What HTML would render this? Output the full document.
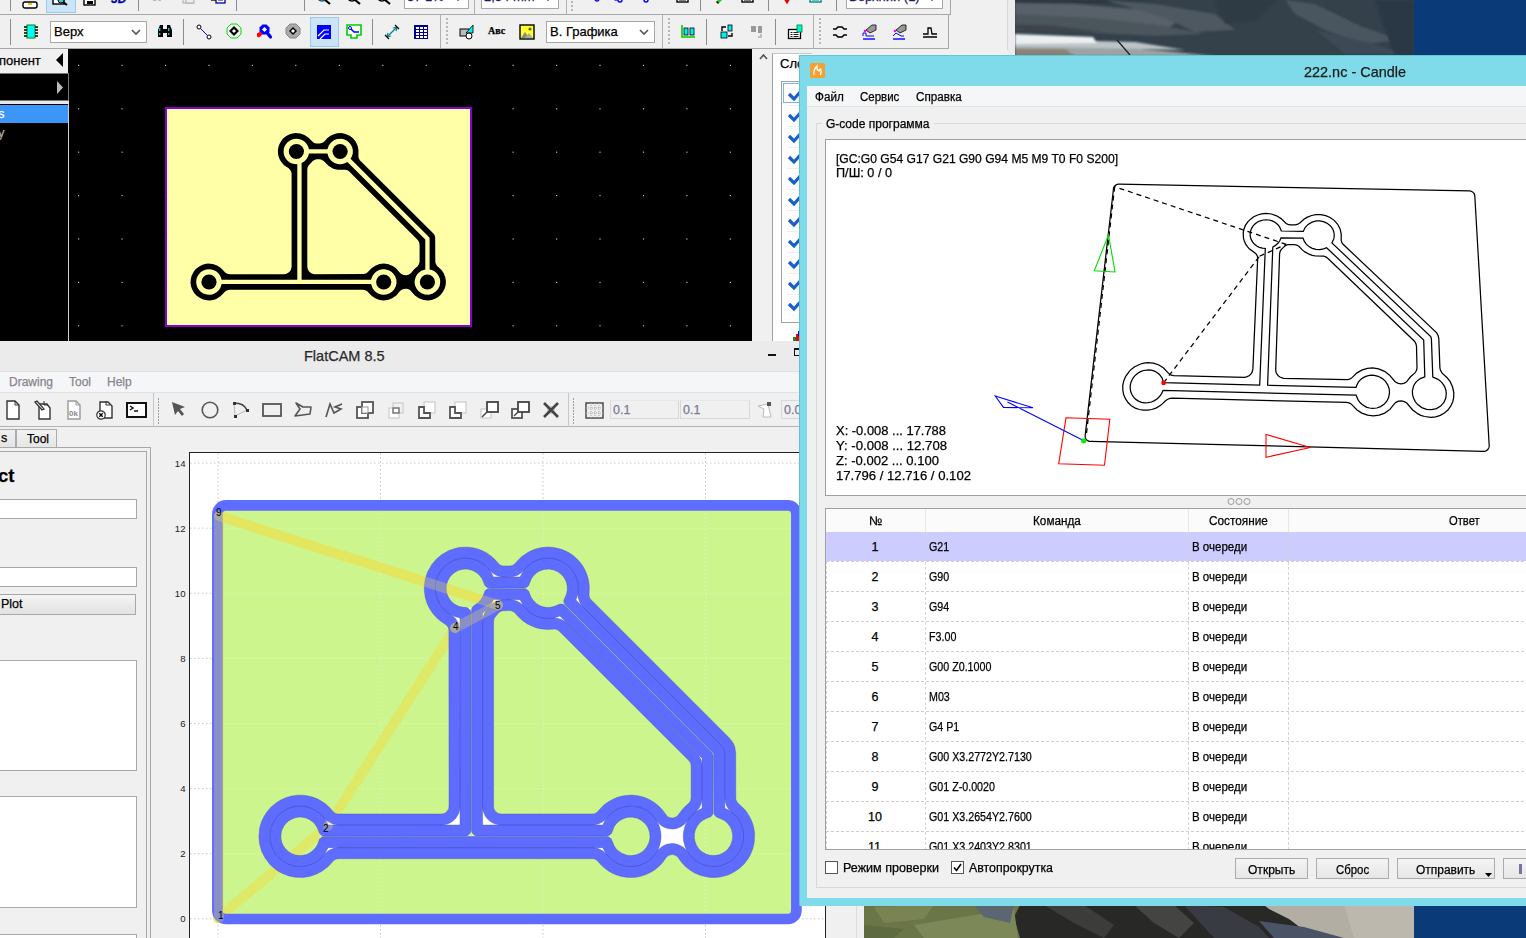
<!DOCTYPE html><html><head><meta charset="utf-8"><style>
*{box-sizing:border-box}
body{margin:0;width:1526px;height:938px;position:relative;overflow:hidden;background:#f0f0f0;font-family:"Liberation Sans",sans-serif;font-size:12px;color:#000}
.a{position:absolute}
.t{position:absolute;white-space:nowrap;line-height:1;-webkit-text-stroke:0.25px currentColor}
svg{position:absolute;overflow:visible}
</style></head><body>

<svg style="left:1015px;top:0" width="399" height="56" viewBox="0 0 399 56"><defs><filter id="bl" x="-5%" y="-20%" width="110%" height="140%"><feGaussianBlur stdDeviation="1.2"/></filter></defs><rect width="399" height="56" fill="#34404a"/><g filter="url(#bl)"><path d="M0 0 H140 L100 3 L0 3 Z" fill="#2c343c"/><path d="M0 3 L60 4 L130 10 L165 20 L150 30 L60 26 L0 24 Z" fill="#58616a"/><path d="M0 14 L80 18 L150 26 L190 34 L140 36 L60 32 L0 30 Z" fill="#4b545c"/><path d="M0 24 L40 26 L90 32 L30 32 L0 31 Z" fill="#3c444c"/><path d="M90 0 L140 4 L200 14 L220 30 L180 32 L150 18 Z" fill="#4e5860"/><path d="M200 0 H260 L240 20 L210 24 Z" fill="#2e3a44"/><path d="M270 0 L300 4 L345 26 L385 40 L350 44 L310 30 L280 14 Z" fill="#4a5660"/><path d="M300 30 L360 44 L390 54 L330 54 Z" fill="#3e4a54"/><path d="M360 0 H399 V56 H380 L370 30 Z" fill="#2c3844"/><path d="M0 46 L90 46 L160 52 L200 56 H0 Z" fill="#9ea2a2"/><path d="M0 49 L50 49 L60 56 H0 Z" fill="#8a8276"/><path d="M0 39 L120 42 L170 50 L80 48 L0 47 Z" fill="#bcc4c8"/><path d="M0 34 L78 37 L82 43 L0 44 Z" fill="#eaf0f2"/></g><path d="M102 40 L115 55" stroke="#1a1e22" stroke-width="1.2"/></svg>
<div class="a" style="left:1414px;top:0;width:112px;height:56px;background:#0a3a78"></div>
<svg style="left:864px;top:905px" width="550" height="33" viewBox="0 0 550 33"><rect width="550" height="33" fill="#282826"/><path d="M0 0 H156 L150 12 L156 33 H0 Z" fill="#6a7548"/><path d="M10 2 L70 0 L60 14 L20 18 Z" fill="#7a8452"/><path d="M50 20 L110 10 L150 4 L154 33 H60 Z" fill="#7c8858"/><path d="M110 0 H150 L146 18 L120 12 Z" fill="#5c6670"/><path d="M0 20 L40 24 L30 33 H0 Z" fill="#5e6a40"/><path d="M180 0 L220 0 L250 20 L240 33 L210 18 Z" fill="#3c3c3a"/><path d="M270 0 L310 0 L330 18 L315 33 L290 18 Z" fill="#444442"/><path d="M320 0 L360 2 L395 22 L405 33 L350 33 Z" fill="#383c42"/><path d="M400 0 H550 V33 H450 L425 14 L405 4 Z" fill="#b3aea3"/><path d="M395 16 L440 22 L480 33 H410 Z" fill="#4a5466"/><path d="M480 0 H550 V33 H490 Z" fill="#bcb8ad"/></svg>
<div class="a" style="left:1414px;top:905px;width:112px;height:33px;background:#0a3a78"></div>
<div class="a" style="left:0;top:0;width:1015px;height:50px;background:#f0f0f0"></div>
<div class="a" style="left:0;top:14px;width:951px;height:1px;background:#a8a8a8"></div>
<div class="a" style="left:950px;top:0;width:1px;height:15px;background:#a8a8a8"></div>
<div class="a" style="left:0;top:48px;width:949px;height:1px;background:#a8a8a8"></div>
<div class="a" style="left:948px;top:15px;width:1px;height:34px;background:#a8a8a8"></div>
<div class="a" style="left:1007px;top:0;width:1px;height:50px;background:#d8d8d8"></div>
<div class="a" style="left:1008px;top:0;width:7px;height:56px;background:#ececec"></div>
<div class="a" style="left:474px;top:0;width:1px;height:14px;background:#b0b0b0"></div>
<div class="a" style="left:566px;top:0;width:1px;height:14px;background:#b0b0b0"></div>
<div class="a" style="left:440px;top:15px;width:1px;height:33px;background:#b0b0b0"></div>
<div class="a" style="left:662px;top:15px;width:1px;height:33px;background:#b0b0b0"></div>
<div class="a" style="left:813px;top:15px;width:1px;height:33px;background:#b0b0b0"></div>
<div class="a" style="left:10px;top:0;width:1px;height:11px;background:#8c8c8c"></div>
<div class="a" style="left:138px;top:0;width:1px;height:11px;background:#8c8c8c"></div>
<div class="a" style="left:236px;top:0;width:1px;height:11px;background:#8c8c8c"></div>
<div class="a" style="left:304px;top:0;width:1px;height:11px;background:#8c8c8c"></div>
<div class="a" style="left:700px;top:0;width:1px;height:11px;background:#8c8c8c"></div>
<div class="a" style="left:768px;top:0;width:1px;height:11px;background:#8c8c8c"></div>
<div class="a" style="left:836px;top:0;width:1px;height:11px;background:#8c8c8c"></div>
<div class="a" style="left:10px;top:19px;width:1px;height:26px;background:#8c8c8c"></div>
<div class="a" style="left:183px;top:19px;width:1px;height:26px;background:#8c8c8c"></div>
<div class="a" style="left:372px;top:19px;width:1px;height:26px;background:#8c8c8c"></div>
<div class="a" style="left:706px;top:19px;width:1px;height:26px;background:#8c8c8c"></div>
<div class="a" style="left:775px;top:19px;width:1px;height:26px;background:#8c8c8c"></div>
<div class="a" style="left:571px;top:1px;width:2px;height:2px;background:#b8b8b8"></div><div class="a" style="left:571px;top:5px;width:2px;height:2px;background:#b8b8b8"></div><div class="a" style="left:571px;top:9px;width:2px;height:2px;background:#b8b8b8"></div>
<div class="a" style="left:446px;top:18px;width:2px;height:2px;background:#b8b8b8"></div><div class="a" style="left:446px;top:22px;width:2px;height:2px;background:#b8b8b8"></div><div class="a" style="left:446px;top:26px;width:2px;height:2px;background:#b8b8b8"></div><div class="a" style="left:446px;top:30px;width:2px;height:2px;background:#b8b8b8"></div><div class="a" style="left:446px;top:34px;width:2px;height:2px;background:#b8b8b8"></div><div class="a" style="left:446px;top:38px;width:2px;height:2px;background:#b8b8b8"></div><div class="a" style="left:446px;top:42px;width:2px;height:2px;background:#b8b8b8"></div>
<div class="a" style="left:668px;top:18px;width:2px;height:2px;background:#b8b8b8"></div><div class="a" style="left:668px;top:22px;width:2px;height:2px;background:#b8b8b8"></div><div class="a" style="left:668px;top:26px;width:2px;height:2px;background:#b8b8b8"></div><div class="a" style="left:668px;top:30px;width:2px;height:2px;background:#b8b8b8"></div><div class="a" style="left:668px;top:34px;width:2px;height:2px;background:#b8b8b8"></div><div class="a" style="left:668px;top:38px;width:2px;height:2px;background:#b8b8b8"></div><div class="a" style="left:668px;top:42px;width:2px;height:2px;background:#b8b8b8"></div>
<div class="a" style="left:819px;top:18px;width:2px;height:2px;background:#b8b8b8"></div><div class="a" style="left:819px;top:22px;width:2px;height:2px;background:#b8b8b8"></div><div class="a" style="left:819px;top:26px;width:2px;height:2px;background:#b8b8b8"></div><div class="a" style="left:819px;top:30px;width:2px;height:2px;background:#b8b8b8"></div><div class="a" style="left:819px;top:34px;width:2px;height:2px;background:#b8b8b8"></div><div class="a" style="left:819px;top:38px;width:2px;height:2px;background:#b8b8b8"></div><div class="a" style="left:819px;top:42px;width:2px;height:2px;background:#b8b8b8"></div>
<div class="a" style="left:46px;top:-2px;width:30px;height:15px;background:#cce4f7;border:1px solid #99c9ef"></div>
<div class="a" style="left:310px;top:17px;width:29px;height:30px;background:#cce4f7;border:1px solid #99c9ef"></div>
<div class="a" style="left:404px;top:-12px;width:65px;height:21px;background:#fff;border:1px solid #a8a8a8"></div>
<svg style="left:453px;top:-5px" width="10" height="6"><path d="M1 1 L5 5 L9 1" fill="none" stroke="#555" stroke-width="1.6"/></svg>
<div class="a" style="left:481px;top:-12px;width:78px;height:21px;background:#fff;border:1px solid #a8a8a8"></div>
<svg style="left:543px;top:-5px" width="10" height="6"><path d="M1 1 L5 5 L9 1" fill="none" stroke="#555" stroke-width="1.6"/></svg>
<div class="a" style="left:846px;top:-12px;width:97px;height:21px;background:#fff;border:1px solid #a8a8a8"></div>
<svg style="left:927px;top:-5px" width="10" height="6"><path d="M1 1 L5 5 L9 1" fill="none" stroke="#555" stroke-width="1.6"/></svg>
<div class="t" style="left:407px;top:-10px;font-size:13px;color:#1a1a6a">37 1%</div>
<div class="t" style="left:484px;top:-10px;font-size:13px;color:#1a1a6a">2,54 mm</div>
<div class="t" style="left:849px;top:-10px;font-size:13px;color:#1a1a6a">Верхний (1)</div>
<div class="a" style="left:50px;top:21px;width:97px;height:22px;background:#fff;border:1px solid #a8a8a8"></div>
<svg style="left:131px;top:29px" width="10" height="6"><path d="M1 1 L5 5 L9 1" fill="none" stroke="#555" stroke-width="1.6"/></svg>
<div class="t" style="left:54px;top:25px;font-size:13px">Верх</div>
<div class="a" style="left:546px;top:21px;width:109px;height:22px;background:#fff;border:1px solid #a8a8a8"></div>
<svg style="left:639px;top:29px" width="10" height="6"><path d="M1 1 L5 5 L9 1" fill="none" stroke="#555" stroke-width="1.6"/></svg>
<div class="t" style="left:550px;top:25px;font-size:13px">В. Графика</div>
<svg style="left:22px;top:-1px" width="16" height="16" viewBox="0 0 16 16"><rect x="1" y="3" width="14" height="6" rx="2" fill="#fff" stroke="#000" stroke-width="1.4"/><rect x="6" y="4" width="4" height="2" fill="#e0d000"/></svg>
<svg style="left:52px;top:-2px" width="16" height="16" viewBox="0 0 16 16"><rect x="1" y="0" width="11" height="6" fill="#fff" stroke="#000" stroke-width="1.4"/><circle cx="9" cy="2" r="3" fill="#3cc" stroke="#000"/><path d="M11 4 L15 7" stroke="#000" stroke-width="2"/></svg>
<svg style="left:82px;top:-2px" width="16" height="16" viewBox="0 0 16 16"><rect x="2" y="-2" width="11" height="9" fill="#fff" stroke="#000" stroke-width="1.4"/><rect x="5" y="3" width="6" height="3" fill="#000"/></svg>
<div class="t" style="left:111px;top:-7px;font-size:12px;font-weight:bold;color:#0000b0;font-style:italic">3D</div>
<svg style="left:150px;top:-2px" width="16" height="16" viewBox="0 0 16 16"><text x="2" y="3" font-size="9" fill="#aaa" font-family="Liberation Sans">80</text></svg>
<svg style="left:180px;top:-3px" width="16" height="16" viewBox="0 0 16 16"><rect x="3" y="0" width="10" height="6" fill="none" stroke="#aaa"/><rect x="6" y="1" width="8" height="5" fill="#eee" stroke="#aaa"/></svg>
<svg style="left:210px;top:-3px" width="16" height="16" viewBox="0 0 16 16"><rect x="1" y="-2" width="7" height="6" fill="#555520"/><rect x="6" y="-1" width="9" height="7" fill="#fff" stroke="#0000a0" stroke-width="1.3"/><path d="M8 3h5" stroke="#0000a0"/></svg>
<svg style="left:254px;top:-4px" width="16" height="16" viewBox="0 0 16 16"><path d="M8 -2v3" stroke="#1010a0" stroke-width="2"/></svg>
<svg style="left:278px;top:-4px" width="16" height="16" viewBox="0 0 16 16"><path d="M8 -2v2" stroke="#888" stroke-width="1.5"/></svg>
<svg style="left:317px;top:-2px" width="16" height="16" viewBox="0 0 16 16"><circle cx="5" cy="-2" r="5" fill="none" stroke="#0a5a8a" stroke-width="1.6"/><path d="M8 2 L13 6" stroke="#000" stroke-width="2.2"/></svg>
<svg style="left:347px;top:-2px" width="16" height="16" viewBox="0 0 16 16"><circle cx="5" cy="-2" r="5" fill="none" stroke="#000" stroke-width="1.6"/><path d="M8 2 L13 6" stroke="#000" stroke-width="2.2"/></svg>
<svg style="left:377px;top:-2px" width="16" height="16" viewBox="0 0 16 16"><circle cx="5" cy="-2" r="5" fill="none" stroke="#000" stroke-width="1.6"/><path d="M8 2 L13 6" stroke="#000" stroke-width="2.2"/></svg>
<svg style="left:589px;top:-3px" width="16" height="16" viewBox="0 0 16 16"><circle cx="8" cy="2" r="2" fill="none" stroke="#00f" stroke-width="1.4"/></svg>
<svg style="left:610px;top:-3px" width="16" height="16" viewBox="0 0 16 16"><circle cx="6" cy="1" r="2" fill="none" stroke="#00f" stroke-width="1.4"/><circle cx="10" cy="3" r="2" fill="none" stroke="#00f" stroke-width="1.4"/></svg>
<svg style="left:642px;top:-3px" width="16" height="16" viewBox="0 0 16 16"><circle cx="4" cy="3" r="2" fill="none" stroke="#00f" stroke-width="1.4"/><path d="M5 2 L10 -1" stroke="#00f" stroke-width="1.4"/><path d="M8 0 L12 -1" stroke="#f00" stroke-width="1.4"/></svg>
<svg style="left:676px;top:-3px" width="16" height="16" viewBox="0 0 16 16"><rect x="1" y="-3" width="11" height="8" fill="#fff" stroke="#000" stroke-width="1.4"/><path d="M3 1h7M3 3h7" stroke="#000"/><circle cx="14" cy="-1" r="2" fill="none" stroke="#00f"/></svg>
<svg style="left:712px;top:-3px" width="16" height="16" viewBox="0 0 16 16"><path d="M5 4 L12 -3 L14 -1 L7 6 Z" fill="#2c2"/><path d="M5 4 L5 6 L7 6" stroke="#000"/></svg>
<svg style="left:740px;top:-3px" width="16" height="16" viewBox="0 0 16 16"><rect x="2" y="-3" width="11" height="8" fill="#fff" stroke="#000" stroke-width="1.4"/><path d="M4 1h7M4 3h7" stroke="#000"/></svg>
<svg style="left:779px;top:-3px" width="16" height="16" viewBox="0 0 16 16"><path d="M3 -3 L8 5 L13 -3" fill="none" stroke="#e00" stroke-width="2.4"/></svg>
<svg style="left:808px;top:-3px" width="16" height="16" viewBox="0 0 16 16"><rect x="2" y="-3" width="11" height="8" fill="#fff" stroke="#088" stroke-width="1.4"/><path d="M4 1h7M4 3h7" stroke="#088"/></svg>
<svg style="left:23px;top:24px" width="16" height="16" viewBox="0 0 16 16"><rect x="4" y="1" width="8" height="13" fill="#0ff" stroke="#080" stroke-width="1"/><path d="M1 3h3M1 6h3M1 9h3M1 12h3M12 3h3M12 6h3M12 9h3M12 12h3" stroke="#000" stroke-width="1.5"/></svg>
<svg style="left:157px;top:23px" width="16" height="16" viewBox="0 0 16 16"><path d="M1 14 V7 L3 2 H6 V14 Z M10 14 V2 H13 L15 7 V14 Z M6 6 H10 V10 H6 Z" fill="#000"/><rect x="2" y="5" width="1.4" height="3" fill="#0cc"/><rect x="11" y="5" width="1.4" height="3" fill="#0cc"/><rect x="2" y="10" width="1.4" height="2" fill="#0cc"/><rect x="11" y="10" width="1.4" height="2" fill="#0cc"/></svg>
<svg style="left:196px;top:24px" width="16" height="16" viewBox="0 0 16 16"><circle cx="3" cy="3" r="2" fill="#fff" stroke="#000"/><circle cx="13" cy="13" r="2" fill="#fff" stroke="#000"/><path d="M4.5 4.5 L11.5 11.5" stroke="#00f"/></svg>
<svg style="left:226px;top:23px" width="16" height="16" viewBox="0 0 16 16"><path d="M5 1 H11 L15 5 V11 L11 15 H5 L1 11 V5 Z" fill="#f0f0f0" stroke="#0d0" stroke-width="1"/><path d="M8 3 L13 8 L8 13 L3 8 Z" fill="#000"/><path d="M8 6 L10 8 L8 10 L6 8 Z" fill="#fff"/></svg>
<svg style="left:256px;top:23px" width="16" height="16" viewBox="0 0 16 16"><path d="M6.5 1.5 H10.5 L13.5 4.5 V8.5 L10.5 11.5 H6.5 L3.5 8.5 V4.5 Z" fill="#00f"/><path d="M8.5 4 L11 6.5 L8.5 9 L6 6.5 Z" fill="#fff"/><path d="M11 9.5 L14.5 14" stroke="#00f" stroke-width="3.2" stroke-linecap="round"/><path d="M1 10.5 L4.5 8.5 L6.5 11.5 L3 14.5 L1 13.5 Z" fill="#f00"/></svg>
<svg style="left:285px;top:23px" width="16" height="16" viewBox="0 0 16 16"><path d="M5 1 H11 L15 5 V11 L11 15 H5 L1 11 V5 Z" fill="#aaa" stroke="#888"/><path d="M8 4 L12 8 L8 12 L4 8 Z" fill="#000"/><path d="M8 6 L10 8 L8 10 L6 8 Z" fill="#fff"/></svg>
<svg style="left:316px;top:24px" width="16" height="16" viewBox="0 0 16 16"><rect x="1" y="1" width="14" height="14" fill="#00f"/><path d="M2 12 L8 6 H13 M4 15 L9 10 H13" stroke="#fff" stroke-width="1.2" fill="none"/></svg>
<svg style="left:346px;top:24px" width="16" height="16" viewBox="0 0 16 16"><path d="M1 1 H15 V11 H11 V14 H5 V11 H1 Z" fill="#fff" stroke="#0c0" stroke-width="1.6"/><circle cx="4" cy="4" r="1.5" fill="none" stroke="#00f"/><path d="M5 5 L8 8 H13" stroke="#00f" stroke-width="1.6" fill="none"/></svg>
<svg style="left:384px;top:24px" width="16" height="16" viewBox="0 0 16 16"><path d="M3 13 L13 3" stroke="#088" stroke-width="1.2"/><path d="M3 13 L4 9 M3 13 L7 12 M13 3 L12 7 M13 3 L9 4" stroke="#088" stroke-width="1.2"/><path d="M1 11 L5 15 M11 1 L15 5" stroke="#000" stroke-width="1.2"/></svg>
<svg style="left:413px;top:24px" width="16" height="16" viewBox="0 0 16 16"><rect x="1" y="1" width="14" height="14" fill="#008"/><g fill="#fff"><rect x="3" y="3" width="3" height="2"/><rect x="7" y="3" width="3" height="2"/><rect x="11" y="3" width="3" height="2"/><rect x="3" y="6" width="3" height="2"/><rect x="7" y="6" width="3" height="2"/><rect x="11" y="6" width="3" height="2"/><rect x="3" y="9" width="3" height="2"/><rect x="7" y="9" width="3" height="2"/><rect x="11" y="9" width="3" height="2"/><rect x="3" y="12" width="3" height="2"/><rect x="7" y="12" width="3" height="2"/><rect x="11" y="12" width="3" height="2"/></g></svg>
<svg style="left:459px;top:24px" width="16" height="16" viewBox="0 0 16 16"><rect x="1" y="5" width="9" height="7" fill="#bbb" stroke="#000"/><path d="M7 9 L14 1 V9 Z" fill="#0ee" stroke="#000" stroke-width=".8"/><circle cx="10" cy="12" r="3" fill="#fff" stroke="#000"/></svg>
<div class="t" style="left:488px;top:26px;font-size:10px;font-family:'Liberation Serif',serif;font-weight:bold">Авс</div>
<svg style="left:519px;top:24px" width="16" height="16" viewBox="0 0 16 16"><rect x="1" y="1" width="14" height="14" fill="#ff3" stroke="#000" stroke-width="1.4"/><path d="M2 14 L6 8 L10 14 Z" fill="#888"/><path d="M6 14 L10 9 L14 14" fill="#aaa"/><circle cx="11" cy="5" r="1.6" fill="#660"/></svg>
<svg style="left:680px;top:23px" width="16" height="16" viewBox="0 0 16 16"><path d="M2 2 V14 H15" fill="none" stroke="#0c0" stroke-width="1.6"/><rect x="4" y="5" width="4" height="7" fill="#0ee" stroke="#000" stroke-width=".8"/><rect x="10" y="5" width="4" height="7" fill="#0ee" stroke="#000" stroke-width=".8"/></svg>
<svg style="left:719px;top:24px" width="16" height="16" viewBox="0 0 16 16"><rect x="2" y="8" width="6" height="6" fill="#0ee" stroke="#000" stroke-width=".8"/><rect x="9" y="1" width="4" height="6" fill="#0ee" stroke="#000" stroke-width=".8"/><path d="M3 7 V3 H7 M13 9 V12 H9" fill="none" stroke="#000" stroke-width="1.4"/></svg>
<svg style="left:749px;top:24px" width="16" height="16" viewBox="0 0 16 16"><rect x="2" y="2" width="5" height="6" fill="#999"/><rect x="9" y="2" width="4" height="7" fill="#999"/><path d="M12 10 V13 H9" fill="none" stroke="#aaa" stroke-width="1.4"/></svg>
<svg style="left:787px;top:24px" width="16" height="16" viewBox="0 0 16 16"><rect x="1.5" y="5.5" width="12" height="9" fill="#fff" stroke="#000" stroke-width="1.3"/><path d="M3.5 8.5h2M6.5 8.5h5M3.5 10.5h2M6.5 10.5h5M3.5 12.5h2M6.5 12.5h5" stroke="#000" stroke-width=".9"/><rect x="10" y="1" width="5" height="7" fill="#0ee" stroke="#080" stroke-width=".8"/></svg>
<svg style="left:832px;top:24px" width="16" height="16" viewBox="0 0 16 16"><path d="M1 5 H4 L6 3 H10 L12 5 H15 M1 11 H4 L6 13 H10 L12 11 H15" fill="none" stroke="#000" stroke-width="1.6"/></svg>
<svg style="left:861px;top:24px" width="16" height="16" viewBox="0 0 16 16"><path d="M5 6 L11 1 H15 V6 L9 9 Z" fill="#999" stroke="#000" stroke-width=".8"/><path d="M2 15 H14" stroke="#00f" stroke-width="1.4"/><path d="M2 12 V9 H5 V12 H13" fill="none" stroke="#00f"/><circle cx="4" cy="7" r="1.3" fill="#f0f"/></svg>
<svg style="left:891px;top:24px" width="16" height="16" viewBox="0 0 16 16"><path d="M5 6 L11 1 H15 V6 L9 9 Z" fill="#999" stroke="#000" stroke-width=".8"/><path d="M2 15 H14" stroke="#00f" stroke-width="1.4"/><path d="M2 12 L5 9 L10 12 H13" fill="none" stroke="#00f"/><circle cx="4" cy="7" r="1.3" fill="#f0f"/></svg>
<svg style="left:922px;top:24px" width="16" height="16" viewBox="0 0 16 16"><path d="M1 10 H6 V4 H9 L10 10 H15 M1 13 H15" fill="none" stroke="#000" stroke-width="1.3"/></svg>
<div class="a" style="left:0;top:49px;width:70px;height:292px;background:#000"></div>
<div class="a" style="left:0;top:49px;width:68px;height:24px;background:#f0f0f0"></div>
<div class="t" style="left:-1px;top:54px;font-size:13px;color:#000">понент</div>
<svg style="left:56px;top:53px" width="7" height="14"><path d="M7 0 V14 L0 7 Z" fill="#000"/></svg>
<div class="a" style="left:0;top:73px;width:69px;height:28px;background:#000;border:1px solid #777;border-left:none"></div>
<svg style="left:57px;top:81px" width="6" height="13"><path d="M0 0 V13 L6 6.5 Z" fill="#bbb"/></svg>
<div class="a" style="left:0;top:101px;width:69px;height:3px;background:#e8e8e8"></div>
<div class="a" style="left:0;top:105px;width:68px;height:18px;background:#3c96f8"></div>
<div class="t" style="left:-2px;top:107px;font-size:13px;color:#fff">s</div>
<div class="t" style="left:-2px;top:126px;font-size:13px;color:#aaa">y</div>
<div class="a" style="left:68px;top:104px;width:1px;height:237px;background:#d0d0d0"></div>
<div class="a" style="left:70px;top:49px;width:682px;height:292px;background:#000"></div>
<svg style="left:70px;top:49px" width="682" height="292" fill="#bbb"><rect x="8.0" y="15.8" width="1.2" height="1.2"/><rect x="8.0" y="59.2" width="1.2" height="1.2"/><rect x="8.0" y="102.6" width="1.2" height="1.2"/><rect x="8.0" y="146.0" width="1.2" height="1.2"/><rect x="8.0" y="189.4" width="1.2" height="1.2"/><rect x="8.0" y="232.8" width="1.2" height="1.2"/><rect x="8.0" y="276.2" width="1.2" height="1.2"/><rect x="51.5" y="15.8" width="1.2" height="1.2"/><rect x="51.5" y="59.2" width="1.2" height="1.2"/><rect x="51.5" y="102.6" width="1.2" height="1.2"/><rect x="51.5" y="146.0" width="1.2" height="1.2"/><rect x="51.5" y="189.4" width="1.2" height="1.2"/><rect x="51.5" y="232.8" width="1.2" height="1.2"/><rect x="51.5" y="276.2" width="1.2" height="1.2"/><rect x="94.9" y="15.8" width="1.2" height="1.2"/><rect x="94.9" y="59.2" width="1.2" height="1.2"/><rect x="94.9" y="102.6" width="1.2" height="1.2"/><rect x="94.9" y="146.0" width="1.2" height="1.2"/><rect x="94.9" y="189.4" width="1.2" height="1.2"/><rect x="94.9" y="232.8" width="1.2" height="1.2"/><rect x="94.9" y="276.2" width="1.2" height="1.2"/><rect x="138.4" y="15.8" width="1.2" height="1.2"/><rect x="138.4" y="59.2" width="1.2" height="1.2"/><rect x="138.4" y="102.6" width="1.2" height="1.2"/><rect x="138.4" y="146.0" width="1.2" height="1.2"/><rect x="138.4" y="189.4" width="1.2" height="1.2"/><rect x="138.4" y="232.8" width="1.2" height="1.2"/><rect x="138.4" y="276.2" width="1.2" height="1.2"/><rect x="181.8" y="15.8" width="1.2" height="1.2"/><rect x="181.8" y="59.2" width="1.2" height="1.2"/><rect x="181.8" y="102.6" width="1.2" height="1.2"/><rect x="181.8" y="146.0" width="1.2" height="1.2"/><rect x="181.8" y="189.4" width="1.2" height="1.2"/><rect x="181.8" y="232.8" width="1.2" height="1.2"/><rect x="181.8" y="276.2" width="1.2" height="1.2"/><rect x="225.2" y="15.8" width="1.2" height="1.2"/><rect x="225.2" y="59.2" width="1.2" height="1.2"/><rect x="225.2" y="102.6" width="1.2" height="1.2"/><rect x="225.2" y="146.0" width="1.2" height="1.2"/><rect x="225.2" y="189.4" width="1.2" height="1.2"/><rect x="225.2" y="232.8" width="1.2" height="1.2"/><rect x="225.2" y="276.2" width="1.2" height="1.2"/><rect x="268.7" y="15.8" width="1.2" height="1.2"/><rect x="268.7" y="59.2" width="1.2" height="1.2"/><rect x="268.7" y="102.6" width="1.2" height="1.2"/><rect x="268.7" y="146.0" width="1.2" height="1.2"/><rect x="268.7" y="189.4" width="1.2" height="1.2"/><rect x="268.7" y="232.8" width="1.2" height="1.2"/><rect x="268.7" y="276.2" width="1.2" height="1.2"/><rect x="312.2" y="15.8" width="1.2" height="1.2"/><rect x="312.2" y="59.2" width="1.2" height="1.2"/><rect x="312.2" y="102.6" width="1.2" height="1.2"/><rect x="312.2" y="146.0" width="1.2" height="1.2"/><rect x="312.2" y="189.4" width="1.2" height="1.2"/><rect x="312.2" y="232.8" width="1.2" height="1.2"/><rect x="312.2" y="276.2" width="1.2" height="1.2"/><rect x="355.6" y="15.8" width="1.2" height="1.2"/><rect x="355.6" y="59.2" width="1.2" height="1.2"/><rect x="355.6" y="102.6" width="1.2" height="1.2"/><rect x="355.6" y="146.0" width="1.2" height="1.2"/><rect x="355.6" y="189.4" width="1.2" height="1.2"/><rect x="355.6" y="232.8" width="1.2" height="1.2"/><rect x="355.6" y="276.2" width="1.2" height="1.2"/><rect x="399.1" y="15.8" width="1.2" height="1.2"/><rect x="399.1" y="59.2" width="1.2" height="1.2"/><rect x="399.1" y="102.6" width="1.2" height="1.2"/><rect x="399.1" y="146.0" width="1.2" height="1.2"/><rect x="399.1" y="189.4" width="1.2" height="1.2"/><rect x="399.1" y="232.8" width="1.2" height="1.2"/><rect x="399.1" y="276.2" width="1.2" height="1.2"/><rect x="442.5" y="15.8" width="1.2" height="1.2"/><rect x="442.5" y="59.2" width="1.2" height="1.2"/><rect x="442.5" y="102.6" width="1.2" height="1.2"/><rect x="442.5" y="146.0" width="1.2" height="1.2"/><rect x="442.5" y="189.4" width="1.2" height="1.2"/><rect x="442.5" y="232.8" width="1.2" height="1.2"/><rect x="442.5" y="276.2" width="1.2" height="1.2"/><rect x="486.0" y="15.8" width="1.2" height="1.2"/><rect x="486.0" y="59.2" width="1.2" height="1.2"/><rect x="486.0" y="102.6" width="1.2" height="1.2"/><rect x="486.0" y="146.0" width="1.2" height="1.2"/><rect x="486.0" y="189.4" width="1.2" height="1.2"/><rect x="486.0" y="232.8" width="1.2" height="1.2"/><rect x="486.0" y="276.2" width="1.2" height="1.2"/><rect x="529.4" y="15.8" width="1.2" height="1.2"/><rect x="529.4" y="59.2" width="1.2" height="1.2"/><rect x="529.4" y="102.6" width="1.2" height="1.2"/><rect x="529.4" y="146.0" width="1.2" height="1.2"/><rect x="529.4" y="189.4" width="1.2" height="1.2"/><rect x="529.4" y="232.8" width="1.2" height="1.2"/><rect x="529.4" y="276.2" width="1.2" height="1.2"/><rect x="572.9" y="15.8" width="1.2" height="1.2"/><rect x="572.9" y="59.2" width="1.2" height="1.2"/><rect x="572.9" y="102.6" width="1.2" height="1.2"/><rect x="572.9" y="146.0" width="1.2" height="1.2"/><rect x="572.9" y="189.4" width="1.2" height="1.2"/><rect x="572.9" y="232.8" width="1.2" height="1.2"/><rect x="572.9" y="276.2" width="1.2" height="1.2"/><rect x="616.3" y="15.8" width="1.2" height="1.2"/><rect x="616.3" y="59.2" width="1.2" height="1.2"/><rect x="616.3" y="102.6" width="1.2" height="1.2"/><rect x="616.3" y="146.0" width="1.2" height="1.2"/><rect x="616.3" y="189.4" width="1.2" height="1.2"/><rect x="616.3" y="232.8" width="1.2" height="1.2"/><rect x="616.3" y="276.2" width="1.2" height="1.2"/><rect x="659.8" y="15.8" width="1.2" height="1.2"/><rect x="659.8" y="59.2" width="1.2" height="1.2"/><rect x="659.8" y="102.6" width="1.2" height="1.2"/><rect x="659.8" y="146.0" width="1.2" height="1.2"/><rect x="659.8" y="189.4" width="1.2" height="1.2"/><rect x="659.8" y="232.8" width="1.2" height="1.2"/><rect x="659.8" y="276.2" width="1.2" height="1.2"/></svg>
<div class="a" style="left:165px;top:107px;width:307px;height:220px;background:#ffffa8;border:2.6px solid #8a00c8"></div>
<svg style="left:0;top:0" width="1526" height="400"><path d="M229.6 289.8 L227.5 290.2 L225.7 291.1 L220.2 296.6 L217.5 298.3 L215.0 299.4 L211.9 300.2 L208.8 300.4 L205.6 300.1 L202.5 299.2 L199.3 297.6 L196.4 295.5 L194.0 292.8 L192.2 289.6 L191.0 286.2 L190.5 282.7 L190.8 279.1 L191.7 275.6 L194.0 271.2 L195.8 269.1 L197.8 267.4 L200.1 265.9 L202.5 264.8 L205.2 264.0 L207.8 263.6 L212.8 264.0 L217.1 265.5 L220.9 267.9 L225.7 272.9 L227.5 273.8 L229.6 274.2 L284.4 274.2 L286.4 273.8 L288.6 272.6 L290.0 271.2 L291.0 269.4 L291.6 266.5 L291.6 173.4 L291.1 171.6 L289.8 169.5 L288.4 168.1 L285.9 166.6 L283.8 164.9 L280.6 161.1 L279.4 158.7 L278.5 156.2 L278.0 153.5 L277.9 150.8 L278.3 147.6 L279.4 144.2 L280.9 141.4 L283.1 138.6 L285.9 136.3 L289.1 134.6 L292.5 133.5 L295.7 133.1 L300.2 133.5 L304.5 134.9 L308.3 137.4 L313.1 142.3 L314.9 143.2 L316.9 143.6 L320.0 143.6 L322.4 142.8 L324.1 141.7 L327.2 138.3 L330.0 136.0 L333.2 134.4 L337.1 133.3 L341.2 133.1 L345.6 133.9 L349.7 135.8 L352.9 138.3 L355.8 141.8 L357.7 145.9 L358.5 150.3 L358.4 156.8 L359.0 158.7 L360.1 160.4 L432.9 232.9 L434.0 234.3 L434.9 236.1 L435.2 238.2 L435.3 261.0 L435.5 263.0 L436.9 265.8 L441.3 269.8 L443.6 273.1 L445.3 277.3 L445.9 281.3 L445.7 284.9 L444.7 288.4 L443.1 291.6 L441.0 294.5 L438.2 296.9 L435.1 298.7 L431.7 299.9 L428.1 300.4 L423.6 300.0 L418.9 298.3 L414.9 295.5 L410.3 290.3 L408.1 289.1 L406.1 288.7 L403.6 289.0 L401.3 290.0 L399.8 291.3 L396.3 295.5 L392.2 298.3 L388.5 299.8 L384.0 300.4 L379.5 299.9 L375.2 298.3 L371.5 295.8 L367.0 291.1 L365.2 290.2 L363.2 289.8 L229.6 289.8 Z M399.4 272.3 L401.3 274.0 L403.6 275.0 L406.1 275.3 L408.5 274.7 L411.1 273.0 L413.9 269.5 L417.3 266.5 L418.5 264.9 L419.3 263.0 L419.6 261.5 L419.6 244.9 L419.2 242.4 L418.0 240.2 L348.7 171.1 L346.9 170.1 L345.4 169.7 L338.0 169.7 L335.3 169.2 L332.8 168.4 L330.4 167.1 L328.2 165.5 L323.7 160.9 L321.0 159.5 L319.5 159.3 L316.4 159.3 L314.4 159.9 L312.7 160.9 L308.6 165.5 L307.7 167.3 L307.3 169.3 L307.3 266.5 L307.7 269.0 L308.9 271.2 L310.3 272.6 L311.6 273.4 L314.5 274.2 L363.7 274.1 L365.7 273.6 L367.4 272.5 L371.5 268.2 L375.2 265.7 L379.5 264.1 L384.0 263.6 L388.5 264.2 L392.7 265.9 L396.3 268.5 L399.4 272.3 Z M221.6 284.1 L371.1 284.1 L372.5 288.0 L373.8 290.1 L375.1 291.4 L377.2 292.9 L378.8 293.8 L381.2 294.5 L383.1 294.7 L386.2 294.5 L389.8 293.2 L392.3 291.4 L394.4 289.1 L395.8 286.3 L396.5 283.2 L396.4 280.1 L395.3 276.5 L393.6 273.9 L391.4 271.8 L388.6 270.2 L385.0 269.3 L382.5 269.3 L380.0 269.8 L377.7 270.7 L376.1 271.8 L374.3 273.4 L372.8 275.4 L371.7 277.7 L371.1 279.8 L301.6 279.8 L301.6 163.1 L304.5 161.3 L306.6 159.1 L308.2 156.3 L309.0 153.6 L327.4 153.6 L328.8 157.5 L331.0 160.5 L334.0 162.7 L337.6 164.0 L340.1 164.2 L342.5 164.0 L344.9 163.2 L347.4 161.9 L425.3 239.4 L425.3 269.4 L421.4 270.7 L418.4 273.0 L416.8 274.9 L415.9 276.5 L414.8 280.1 L414.6 282.6 L415.2 285.7 L416.5 288.5 L418.4 291.0 L421.4 293.2 L424.9 294.5 L428.7 294.7 L432.3 293.8 L435.5 291.8 L438.1 289.1 L439.7 285.7 L440.2 282.0 L440.1 280.1 L439.5 277.7 L438.4 275.4 L437.3 273.9 L436.0 272.5 L434.0 271.1 L431.7 270.0 L429.6 269.4 L429.6 238.5 L429.2 237.3 L350.5 158.8 L351.6 156.9 L352.5 154.6 L352.8 152.7 L352.8 150.2 L352.5 148.4 L351.6 146.0 L350.3 143.9 L349.1 142.4 L346.6 140.5 L343.8 139.3 L341.3 138.8 L338.2 138.9 L336.3 139.3 L334.0 140.2 L331.0 142.4 L328.8 145.5 L327.4 149.3 L309.0 149.3 L308.4 147.2 L307.3 144.9 L306.3 143.4 L304.5 141.6 L302.4 140.2 L300.7 139.5 L298.2 138.9 L296.4 138.7 L293.9 139.0 L291.5 139.7 L289.3 140.9 L287.3 142.4 L285.7 144.4 L284.5 146.6 L283.8 149.0 L283.6 151.5 L283.8 153.9 L284.8 156.9 L286.1 159.1 L287.8 160.9 L289.8 162.4 L292.1 163.5 L294.5 164.1 L297.3 164.2 L297.3 279.8 L221.6 279.8 L221.0 277.7 L220.0 275.4 L218.9 273.9 L217.1 272.1 L215.6 271.1 L213.3 270.0 L211.5 269.5 L209.0 269.2 L206.5 269.5 L204.7 270.0 L203.0 270.7 L200.9 272.1 L199.1 273.9 L197.7 276.0 L196.7 278.3 L196.3 280.1 L196.2 282.6 L196.6 285.1 L197.4 287.4 L198.7 289.6 L200.4 291.4 L202.4 292.9 L204.7 294.0 L207.1 294.6 L209.6 294.7 L212.1 294.4 L214.5 293.5 L216.6 292.2 L218.5 290.5 L220.0 288.5 L221.0 286.3 L221.6 284.1 Z" fill="#000" fill-rule="evenodd"/><circle cx="296.4" cy="151.5" r="7.6" fill="#000"/><circle cx="340.1" cy="151.5" r="7.6" fill="#000"/><circle cx="209.0" cy="282.0" r="7.6" fill="#000"/><circle cx="383.7" cy="282.0" r="7.6" fill="#000"/><circle cx="427.4" cy="282.0" r="7.6" fill="#000"/></svg>
<div class="a" style="left:752px;top:49px;width:48px;height:292px;background:#f0f0f0"></div>
<svg style="left:759px;top:54px" width="9" height="6"><path d="M1 5 L4.5 1 L8 5" fill="none" stroke="#555" stroke-width="1.6"/></svg>
<div class="a" style="left:772px;top:53px;width:40px;height:288px;background:#fff;border-left:1px solid #a0a0a0;border-top:1px solid #c8c8c8"></div>
<div class="t" style="left:780px;top:57px;font-size:13px;color:#000">Слои</div>
<div class="a" style="left:781px;top:81px;width:30px;height:242px;border:1px solid #a0a0a0;background:#fff"></div>
<div class="a" style="left:783px;top:83px;width:30px;height:20px;border:1px solid #7eb4ea"></div>
<svg style="left:789px;top:81px" width="20" height="240"><path d="M0 13 L5 18 L13 9" fill="none" stroke="#1a5fc8" stroke-width="3.2"/><path d="M0 34 L5 39 L13 30" fill="none" stroke="#1a5fc8" stroke-width="3.2"/><rect x="-2" y="24" width="30" height="1" fill="#eee"/><path d="M0 55 L5 60 L13 51" fill="none" stroke="#1a5fc8" stroke-width="3.2"/><rect x="-2" y="45" width="30" height="1" fill="#eee"/><path d="M0 76 L5 81 L13 72" fill="none" stroke="#1a5fc8" stroke-width="3.2"/><rect x="-2" y="66" width="30" height="1" fill="#eee"/><path d="M0 97 L5 102 L13 93" fill="none" stroke="#1a5fc8" stroke-width="3.2"/><rect x="-2" y="87" width="30" height="1" fill="#eee"/><path d="M0 118 L5 123 L13 114" fill="none" stroke="#1a5fc8" stroke-width="3.2"/><rect x="-2" y="108" width="30" height="1" fill="#eee"/><path d="M0 139 L5 144 L13 135" fill="none" stroke="#1a5fc8" stroke-width="3.2"/><rect x="-2" y="129" width="30" height="1" fill="#eee"/><path d="M0 160 L5 165 L13 156" fill="none" stroke="#1a5fc8" stroke-width="3.2"/><rect x="-2" y="150" width="30" height="1" fill="#eee"/><path d="M0 181 L5 186 L13 177" fill="none" stroke="#1a5fc8" stroke-width="3.2"/><rect x="-2" y="171" width="30" height="1" fill="#eee"/><path d="M0 202 L5 207 L13 198" fill="none" stroke="#1a5fc8" stroke-width="3.2"/><rect x="-2" y="192" width="30" height="1" fill="#eee"/><path d="M0 223 L5 228 L13 219" fill="none" stroke="#1a5fc8" stroke-width="3.2"/><rect x="-2" y="213" width="30" height="1" fill="#eee"/></svg>
<div class="a" style="left:793px;top:337px;width:3px;height:4px;background:#1a8a1a"></div>
<div class="a" style="left:796px;top:334px;width:3px;height:7px;background:#e00"></div>
<div class="a" style="left:798px;top:331px;width:2px;height:5px;background:#00e"></div>
<div class="a" style="left:0;top:341px;width:864px;height:597px;background:#f0f0f0"></div>
<div class="a" style="left:0;top:341px;width:864px;height:30px;background:#ebebeb"></div>
<div class="t" style="left:304px;top:349px;font-size:14.5px;color:#2a2a2a">FlatCAM 8.5</div>
<div class="a" style="left:768px;top:354px;width:8px;height:2px;background:#111"></div>
<div class="a" style="left:794px;top:348px;width:10px;height:8px;border:1px solid #111;border-top-width:2px"></div>
<div class="a" style="left:0;top:371px;width:864px;height:22px;background:#f5f6f7;border-top:1px solid #e2e2e2;border-bottom:1px solid #e2e2e2"></div>
<div class="t" style="left:9px;top:376px;font-size:12px;color:#8a8490">Drawing</div>
<div class="t" style="left:69px;top:376px;font-size:12px;color:#8a8490">Tool</div>
<div class="t" style="left:107px;top:376px;font-size:12px;color:#8a8490">Help</div>
<div class="a" style="left:0;top:393px;width:864px;height:34px;background:#f0f0f0;border-bottom:1px solid #b4b4b4"></div>
<div class="a" style="left:153px;top:393px;width:1px;height:34px;background:#c8c8c8"></div>
<div class="a" style="left:568px;top:393px;width:1px;height:34px;background:#c8c8c8"></div>
<div class="a" style="left:158px;top:398px;width:1px;height:2px;background:#a0a0a0"></div><div class="a" style="left:158px;top:401px;width:1px;height:2px;background:#a0a0a0"></div><div class="a" style="left:158px;top:404px;width:1px;height:2px;background:#a0a0a0"></div><div class="a" style="left:158px;top:407px;width:1px;height:2px;background:#a0a0a0"></div><div class="a" style="left:158px;top:410px;width:1px;height:2px;background:#a0a0a0"></div><div class="a" style="left:158px;top:413px;width:1px;height:2px;background:#a0a0a0"></div><div class="a" style="left:158px;top:416px;width:1px;height:2px;background:#a0a0a0"></div><div class="a" style="left:158px;top:419px;width:1px;height:2px;background:#a0a0a0"></div><div class="a" style="left:158px;top:422px;width:1px;height:2px;background:#a0a0a0"></div>
<div class="a" style="left:573px;top:398px;width:1px;height:2px;background:#a0a0a0"></div><div class="a" style="left:573px;top:401px;width:1px;height:2px;background:#a0a0a0"></div><div class="a" style="left:573px;top:404px;width:1px;height:2px;background:#a0a0a0"></div><div class="a" style="left:573px;top:407px;width:1px;height:2px;background:#a0a0a0"></div><div class="a" style="left:573px;top:410px;width:1px;height:2px;background:#a0a0a0"></div><div class="a" style="left:573px;top:413px;width:1px;height:2px;background:#a0a0a0"></div><div class="a" style="left:573px;top:416px;width:1px;height:2px;background:#a0a0a0"></div><div class="a" style="left:573px;top:419px;width:1px;height:2px;background:#a0a0a0"></div><div class="a" style="left:573px;top:422px;width:1px;height:2px;background:#a0a0a0"></div>
<svg style="left:5px;top:400px" width="20" height="20" viewBox="0 0 20 20"><path d="M2 1 H10 L14 5 V19 H2 Z" fill="#fff" stroke="#333" stroke-width="1.4"/><path d="M10 1 V5 H14" fill="none" stroke="#333" stroke-width="1"/></svg>
<svg style="left:34px;top:400px" width="20" height="20" viewBox="0 0 20 20"><path d="M5 4 H13 L16 8 V19 H5 Z" fill="#fff" stroke="#333" stroke-width="1.4"/><path d="M10 1 V5 H14" fill="none" stroke="#333" stroke-width="1"/><path d="M1 2 L8 10 L10 9 L3 1 Z" fill="#fff" stroke="#333" stroke-width="1.3"/></svg>
<svg style="left:66px;top:400px" width="20" height="20" viewBox="0 0 20 20"><path d="M2 1 H10 L14 5 V19 H2 Z" fill="#fff" stroke="#999" stroke-width="1.4"/><path d="M10 1 V5 H14" fill="none" stroke="#999" stroke-width="1"/><text x="3" y="16" font-size="8" font-weight="bold" fill="#888" font-family="Liberation Sans">0k</text></svg>
<svg style="left:96px;top:400px" width="20" height="20" viewBox="0 0 20 20"><path d="M4 2 H12 L16 6 V18 H4 Z" fill="#fff" stroke="#333" stroke-width="1.4"/><path d="M10 1 V5 H14" fill="none" stroke="#333" stroke-width="1"/><circle cx="5" cy="15" r="4.2" fill="#fff" stroke="#333" stroke-width="1.2"/><path d="M3.3 13.3 L6.7 16.7 M6.7 13.3 L3.3 16.7" stroke="#000" stroke-width="1.3"/></svg>
<svg style="left:126px;top:401px" width="21" height="18" viewBox="0 0 21 18"><rect x="1" y="2" width="19" height="14" fill="#fff" stroke="#111" stroke-width="2"/><path d="M4 5 L7 7 L4 9 M8 10 H12" fill="none" stroke="#111" stroke-width="1.5"/></svg>
<svg style="left:171px;top:401px" width="18" height="18" viewBox="0 0 18 18"><path d="M1 1 L14 6 L9 8 L13 13 L11 15 L7 10 L4 14 Z" fill="#555"/></svg>
<svg style="left:201px;top:401px" width="18" height="18" viewBox="0 0 18 18"><circle cx="9" cy="9" r="7.8" fill="none" stroke="#555" stroke-width="1.6"/></svg>
<svg style="left:232px;top:401px" width="18" height="18" viewBox="0 0 18 18"><path d="M2 2 Q12 2 15 9" fill="none" stroke="#444" stroke-width="1.5"/><path d="M15 9 L3 15 L2 2" fill="none" stroke="#aaa" stroke-width=".8"/><rect x="1" y="1" width="3" height="3" fill="#333"/><rect x="14" y="8" width="3" height="3" fill="#333"/><rect x="2" y="14" width="3" height="3" fill="#333"/></svg>
<svg style="left:262px;top:403px" width="20" height="14" viewBox="0 0 20 14"><rect x="1" y="1" width="18" height="12" fill="none" stroke="#555" stroke-width="1.8"/></svg>
<svg style="left:293px;top:401px" width="19" height="18" viewBox="0 0 19 18"><path d="M2 15 L7 8 L3 2 L10 6 L18 6 L17 13 Z" fill="none" stroke="#555" stroke-width="1.6" stroke-linejoin="round"/></svg>
<svg style="left:325px;top:401px" width="18" height="18" viewBox="0 0 18 18"><path d="M1 16 L5 3 L9 12 L16 8 L10 6 L17 3" fill="none" stroke="#555" stroke-width="1.6"/></svg>
<svg style="left:356px;top:401px" width="18" height="18" viewBox="0 0 18 18"><rect x="1" y="6" width="11" height="11" fill="#fff" stroke="#555" stroke-width="1.8"/><rect x="6" y="1" width="11" height="11" fill="#fff" stroke="#555" stroke-width="1.8"/><rect x="6" y="6" width="6" height="6" fill="#fff" stroke="#999"/></svg>
<svg style="left:388px;top:402px" width="17" height="17" viewBox="0 0 17 17"><rect x="1" y="6" width="10" height="10" fill="#fff" stroke="#ccc" stroke-width="1.2"/><rect x="5" y="1" width="10" height="10" fill="none" stroke="#ccc" stroke-width="1.2"/><rect x="5" y="6" width="6" height="5" fill="none" stroke="#777" stroke-width="1.4"/></svg>
<svg style="left:418px;top:401px" width="18" height="18" viewBox="0 0 18 18"><rect x="6" y="1" width="11" height="11" fill="#fff" stroke="#ccc" stroke-width="1.2"/><path d="M1 6 V17 H12 V12 H6 V6 Z" fill="#fff" stroke="#555" stroke-width="1.8"/></svg>
<svg style="left:449px;top:401px" width="18" height="18" viewBox="0 0 18 18"><rect x="6" y="1" width="11" height="11" fill="#fff" stroke="#ccc" stroke-width="1.2"/><path d="M1 6 H6 V12 H12 V17 H1 Z" fill="#fff" stroke="#555" stroke-width="1.8"/></svg>
<svg style="left:480px;top:401px" width="19" height="18" viewBox="0 0 19 18"><rect x="1" y="8" width="10" height="9" fill="#fff" stroke="#ccc" stroke-width="1.2"/><rect x="7" y="1" width="11" height="10" fill="#fff" stroke="#444" stroke-width="1.8"/><path d="M2 16 L7 11" stroke="#444" stroke-width="1.5"/></svg>
<svg style="left:511px;top:401px" width="19" height="18" viewBox="0 0 19 18"><rect x="1" y="8" width="10" height="9" fill="#fff" stroke="#555" stroke-width="1.8"/><rect x="7" y="1" width="11" height="10" fill="#fff" stroke="#444" stroke-width="1.8"/><path d="M3 15 L7 11" stroke="#444" stroke-width="1.5"/></svg>
<svg style="left:542px;top:401px" width="18" height="18" viewBox="0 0 18 18"><rect x="5" y="5" width="8" height="8" fill="#ccc"/><path d="M2 2 L16 16 M16 2 L2 16" stroke="#444" stroke-width="2.6"/></svg>
<svg style="left:585px;top:402px" width="19" height="17" viewBox="0 0 19 17"><rect x="1" y="1" width="17" height="15" fill="#eee" stroke="#555" stroke-width="1.6"/><path d="M6 1 V16 M10 1 V16 M14 1 V16 M1 6 H18 M1 11 H18" stroke="#aaa" stroke-dasharray="1 1"/></svg>
<div class="a" style="left:610px;top:400px;width:69px;height:19px;background:#f0f0f0;border:1px solid #d8d8d8;border-top-color:#e8e8e8"></div>
<div class="t" style="left:613px;top:404px;font-size:12.5px;color:#7a7a98">0.1</div>
<div class="a" style="left:680px;top:400px;width:70px;height:19px;background:#f0f0f0;border:1px solid #d8d8d8;border-top-color:#e8e8e8"></div>
<div class="t" style="left:683px;top:404px;font-size:12.5px;color:#7a7a98">0.1</div>
<svg style="left:757px;top:401px" width="17" height="18" viewBox="0 0 17 18"><path d="M1 5 L11 3 L14 16 H6 L7 8 Z" fill="#fff" stroke="#bbb" stroke-width="1"/><rect x="10" y="1" width="4" height="4" fill="#555"/></svg>
<div class="a" style="left:781px;top:400px;width:40px;height:19px;background:#f0f0f0;border:1px solid #d8d8d8"></div>
<div class="t" style="left:784px;top:404px;font-size:12.5px;color:#7a7a98">0.0</div>
<div class="a" style="left:-5px;top:429px;width:21px;height:19px;background:linear-gradient(#f0f0f0,#e4e4e4);border:1px solid #acacac"></div>
<div class="t" style="left:1px;top:432px;font-size:12.5px;color:#000">s</div>
<div class="a" style="left:16px;top:429px;width:41px;height:19px;background:linear-gradient(#f2f2f2,#e6e6e6);border:1px solid #acacac"></div>
<div class="t" style="left:27px;top:433px;font-size:12px;color:#000">Tool</div>
<div class="a" style="left:-2px;top:447px;width:153px;height:500px;border:1px solid #a8a8a8"></div>
<div class="a" style="left:-2px;top:451px;width:149px;height:500px;border:1px solid #a8a8a8"></div>
<div class="t" style="left:-2px;top:467px;font-size:18.5px;font-weight:bold;color:#000">ct</div>
<div class="a" style="left:856px;top:905px;width:1px;height:33px;background:#dcdcdc"></div>
<div class="a" style="left:-2px;top:499px;width:139px;height:20px;background:#fff;border:1px solid #a8a8a8"></div>
<div class="a" style="left:-2px;top:567px;width:139px;height:20px;background:#fff;border:1px solid #a8a8a8"></div>
<div class="a" style="left:-2px;top:594px;width:138px;height:21px;background:linear-gradient(#f4f4f4,#e2e2e2);border:1px solid #a8a8a8"></div>
<div class="t" style="left:1px;top:598px;font-size:12.5px;color:#000">Plot</div>
<div class="a" style="left:-2px;top:660px;width:139px;height:111px;background:#fff;border:1px solid #a8a8a8"></div>
<div class="a" style="left:-2px;top:796px;width:139px;height:112px;background:#fff;border:1px solid #a8a8a8"></div>
<div class="a" style="left:-2px;top:934px;width:139px;height:20px;background:#fff;border:1px solid #a8a8a8"></div>
<div class="a" style="left:189px;top:452px;width:637px;height:486px;background:#fff;border-left:1px solid #222;border-top:1px solid #222;border-right:1px solid #222"></div>
<svg style="left:0;top:0" width="1526" height="938"><path d="M218.0 453 V938" stroke="#c8c8c8" stroke-width="1" stroke-dasharray="1.5 2.5"/><path d="M380.5 453 V938" stroke="#c8c8c8" stroke-width="1" stroke-dasharray="1.5 2.5"/><path d="M543.0 453 V938" stroke="#c8c8c8" stroke-width="1" stroke-dasharray="1.5 2.5"/><path d="M705.5 453 V938" stroke="#c8c8c8" stroke-width="1" stroke-dasharray="1.5 2.5"/><path d="M190 918.8 H825" stroke="#c8c8c8" stroke-width="1" stroke-dasharray="1.5 2.5"/><path d="M190 853.7 H825" stroke="#c8c8c8" stroke-width="1" stroke-dasharray="1.5 2.5"/><path d="M190 788.6 H825" stroke="#c8c8c8" stroke-width="1" stroke-dasharray="1.5 2.5"/><path d="M190 723.5 H825" stroke="#c8c8c8" stroke-width="1" stroke-dasharray="1.5 2.5"/><path d="M190 658.4 H825" stroke="#c8c8c8" stroke-width="1" stroke-dasharray="1.5 2.5"/><path d="M190 593.3 H825" stroke="#c8c8c8" stroke-width="1" stroke-dasharray="1.5 2.5"/><path d="M190 528.2 H825" stroke="#c8c8c8" stroke-width="1" stroke-dasharray="1.5 2.5"/><path d="M190 463.1 H825" stroke="#c8c8c8" stroke-width="1" stroke-dasharray="1.5 2.5"/><text x="185.5" y="922.4" font-size="9.6" text-anchor="end" fill="#222" font-family="Liberation Sans">0</text><text x="185.5" y="857.3" font-size="9.6" text-anchor="end" fill="#222" font-family="Liberation Sans">2</text><text x="185.5" y="792.2" font-size="9.6" text-anchor="end" fill="#222" font-family="Liberation Sans">4</text><text x="185.5" y="727.1" font-size="9.6" text-anchor="end" fill="#222" font-family="Liberation Sans">6</text><text x="185.5" y="662.0" font-size="9.6" text-anchor="end" fill="#222" font-family="Liberation Sans">8</text><text x="185.5" y="596.9" font-size="9.6" text-anchor="end" fill="#222" font-family="Liberation Sans">10</text><text x="185.5" y="531.8" font-size="9.6" text-anchor="end" fill="#222" font-family="Liberation Sans">12</text><text x="185.5" y="466.7" font-size="9.6" text-anchor="end" fill="#222" font-family="Liberation Sans">14</text><rect x="217.4" y="505.4" width="579" height="413.6" rx="8" fill="#ccf58e"/><path d="M218.0 505 V919" stroke="#fff" stroke-opacity="0.35" stroke-width="1" stroke-dasharray="1.5 2.5"/><path d="M380.5 505 V919" stroke="#fff" stroke-opacity="0.35" stroke-width="1" stroke-dasharray="1.5 2.5"/><path d="M543.0 505 V919" stroke="#fff" stroke-opacity="0.35" stroke-width="1" stroke-dasharray="1.5 2.5"/><path d="M705.5 505 V919" stroke="#fff" stroke-opacity="0.35" stroke-width="1" stroke-dasharray="1.5 2.5"/><path d="M218 918.8 H797" stroke="#fff" stroke-opacity="0.35" stroke-width="1" stroke-dasharray="1.5 2.5"/><path d="M218 853.7 H797" stroke="#fff" stroke-opacity="0.35" stroke-width="1" stroke-dasharray="1.5 2.5"/><path d="M218 788.6 H797" stroke="#fff" stroke-opacity="0.35" stroke-width="1" stroke-dasharray="1.5 2.5"/><path d="M218 723.5 H797" stroke="#fff" stroke-opacity="0.35" stroke-width="1" stroke-dasharray="1.5 2.5"/><path d="M218 658.4 H797" stroke="#fff" stroke-opacity="0.35" stroke-width="1" stroke-dasharray="1.5 2.5"/><path d="M218 593.3 H797" stroke="#fff" stroke-opacity="0.35" stroke-width="1" stroke-dasharray="1.5 2.5"/><path d="M218 528.2 H797" stroke="#fff" stroke-opacity="0.35" stroke-width="1" stroke-dasharray="1.5 2.5"/><path d="M218 918 L328 826" stroke="#dfe968" stroke-width="10" stroke-linecap="round"/><path d="M328 826 L455 628" stroke="#dfe968" stroke-width="10" stroke-linecap="round"/><path d="M455 628 L498 605" stroke="#dfe968" stroke-width="10" stroke-linecap="round"/><path d="M498 605 L219 516" stroke="#dfe968" stroke-width="10" stroke-linecap="round"/><path d="M219 516 L219 918" stroke="#dfe968" stroke-width="10" stroke-linecap="round"/><rect x="217.4" y="505.4" width="579" height="413.6" rx="8.6" fill="none" stroke="#5e6cff" stroke-width="10.7"/><path d="M332.0 862.4 L329.7 865.0 L328.2 866.5 L332.0 862.4 Z M328.2 866.5 L324.2 869.8 L321.9 871.3 L328.2 866.5 Z M321.9 871.3 L318.9 873.0 L316.5 874.1 L321.9 871.3 Z M316.5 874.1 L312.7 875.5 L310.6 876.2 L316.5 874.1 Z M310.6 876.2 L306.7 877.0 L303.4 877.4 L310.6 876.2 Z M303.4 877.4 L298.8 877.5 L295.5 877.3 L303.4 877.4 Z M295.5 877.3 L291.5 876.6 L288.7 875.9 L295.5 877.3 Z M288.7 875.9 L284.8 874.6 L282.0 873.3 L288.7 875.9 Z M282.0 873.3 L280.0 872.3 L278.3 871.3 L282.0 873.3 Z M278.3 871.3 L276.1 869.8 L275.1 869.1 L278.3 871.3 Z M275.1 869.1 L272.0 866.5 L269.9 864.4 L275.1 869.1 Z M269.9 864.4 L266.6 860.4 L265.1 858.1 L269.9 864.4 Z M265.1 858.1 L263.1 854.4 L261.7 851.4 L265.1 858.1 Z M261.7 851.4 L260.5 847.6 L259.6 843.8 L261.7 851.4 Z M259.6 843.8 L259.0 839.8 L258.9 836.9 L259.6 843.8 Z M258.9 836.9 L259.0 832.8 L259.5 829.0 L258.9 836.9 Z M259.5 829.0 L260.0 826.9 L260.5 825.0 L259.5 829.0 Z M260.5 825.0 L261.1 823.0 L261.7 821.2 L260.5 825.0 Z M261.7 821.2 L263.1 818.1 L264.1 816.3 L261.7 821.2 Z M264.1 816.3 L266.1 813.0 L267.4 811.2 L264.1 816.3 Z M267.4 811.2 L269.9 808.2 L271.4 806.7 L267.4 811.2 Z M271.4 806.7 L274.4 804.1 L276.0 802.9 L271.4 806.7 Z M276.0 802.9 L278.3 801.3 L280.2 800.3 L276.0 802.9 Z M280.2 800.3 L283.7 798.5 L285.7 797.7 L280.2 800.3 Z M285.7 797.7 L288.8 796.7 L291.4 796.1 L285.7 797.7 Z M291.4 796.1 L294.7 795.5 L297.5 795.2 L291.4 796.1 Z M297.5 795.2 L300.8 795.1 L302.7 795.2 L297.5 795.2 Z M302.7 795.2 L305.4 795.5 L307.4 795.8 L302.7 795.2 Z M307.4 795.8 L310.8 796.5 L312.6 797.1 L307.4 795.8 Z M312.6 797.1 L315.2 798.0 L317.2 798.8 L312.6 797.1 Z M317.2 798.8 L320.1 800.3 L321.7 801.3 L317.2 798.8 Z M321.7 801.3 L324.1 802.8 L325.8 804.1 L321.7 801.3 Z M325.8 804.1 L328.3 806.3 L329.6 807.6 L325.8 804.1 Z M329.6 807.6 L331.0 809.1 L331.5 809.6 L329.6 807.6 Z M445.6 624.4 L443.0 622.9 L440.4 621.0 L445.6 624.4 Z M440.4 621.0 L438.3 619.3 L436.7 617.8 L440.4 621.0 Z M436.7 617.8 L434.4 615.4 L432.8 613.4 L436.7 617.8 Z M432.8 613.4 L430.8 610.6 L429.4 608.3 L432.8 613.4 Z M429.4 608.3 L427.9 605.3 L427.1 603.4 L429.4 608.3 Z M427.1 603.4 L425.8 599.7 L425.3 597.6 L427.1 603.4 Z M425.3 597.6 L424.6 593.8 L424.4 591.6 L425.3 597.6 Z M424.4 591.6 L424.2 588.9 L424.3 585.7 L424.4 591.6 Z M424.3 585.7 L424.8 581.7 L425.3 578.8 L424.3 585.7 Z M425.3 578.8 L426.4 574.9 L427.6 571.9 L425.3 578.8 Z M427.6 571.9 L429.4 568.3 L431.5 564.9 L427.6 571.9 Z M431.5 564.9 L433.9 561.7 L435.9 559.6 L431.5 564.9 Z M435.9 559.6 L438.9 556.8 L441.5 554.8 L435.9 559.6 Z M441.5 554.8 L445.4 552.3 L448.3 550.8 L441.5 554.8 Z M448.3 550.8 L452.1 549.3 L454.9 548.5 L448.3 550.8 Z M454.9 548.5 L456.8 548.0 L458.7 547.6 L454.9 548.5 Z M458.7 547.6 L462.0 547.2 L462.8 547.2 L458.7 547.6 Z M462.8 547.2 L466.1 547.1 L468.0 547.2 L462.8 547.2 Z M468.0 547.2 L470.8 547.4 L472.8 547.7 L468.0 547.2 Z M472.8 547.7 L476.1 548.5 L477.9 549.0 L472.8 547.7 Z M477.9 549.0 L480.6 550.0 L482.5 550.8 L477.9 549.0 Z M482.5 550.8 L485.5 552.3 L487.1 553.2 L482.5 550.8 Z M487.1 553.2 L489.4 554.8 L491.1 556.1 L487.1 553.2 Z M491.1 556.1 L493.6 558.2 L495.0 559.6 L491.1 556.1 Z M495.0 559.6 L496.3 561.0 L496.8 561.6 L495.0 559.6 Z M515.7 562.9 L517.1 561.1 L518.5 559.7 L515.7 562.9 Z M518.5 559.7 L520.0 558.1 L521.5 556.8 L518.5 559.7 Z M521.5 556.8 L524.7 554.3 L528.1 552.3 L521.5 556.8 Z M528.1 552.3 L530.0 551.3 L531.7 550.5 L528.1 552.3 Z M531.7 550.5 L533.7 549.7 L535.6 549.0 L531.7 550.5 Z M535.6 549.0 L538.8 548.2 L540.6 547.8 L535.6 549.0 Z M540.6 547.8 L542.8 547.4 L544.6 547.2 L540.6 547.8 Z M544.6 547.2 L546.8 547.1 L548.8 547.1 L544.6 547.2 Z M548.8 547.1 L551.4 547.2 L553.5 547.4 L548.8 547.1 Z M553.5 547.4 L555.6 547.8 L557.4 548.2 L553.5 547.4 Z M557.4 548.2 L560.6 549.0 L561.5 549.3 L557.4 548.2 Z M561.5 549.3 L564.5 550.5 L566.2 551.3 L561.5 549.3 Z M566.2 551.3 L568.1 552.3 L569.8 553.2 L566.2 551.3 Z M569.8 553.2 L572.1 554.8 L573.2 555.6 L569.8 553.2 Z M573.2 555.6 L575.3 557.3 L576.8 558.8 L573.2 555.6 Z M576.8 558.8 L579.1 561.1 L580.3 562.6 L576.8 558.8 Z M580.3 562.6 L582.0 564.8 L583.1 566.5 L580.3 562.6 Z M583.1 566.5 L584.2 568.4 L585.1 570.2 L583.1 566.5 Z M585.1 570.2 L586.4 573.2 L587.1 575.1 L585.1 570.2 Z M587.1 575.1 L587.9 577.6 L588.4 579.7 L587.1 575.1 Z M588.4 579.7 L589.0 582.9 L589.2 584.8 L588.4 579.7 Z M589.2 584.8 L589.3 587.0 L589.3 589.0 L589.2 584.8 Z M589.3 589.0 L589.2 590.9 L589.2 591.5 L589.3 589.0 Z M729.1 737.7 L730.8 739.6 L732.1 741.4 L729.1 737.7 Z M732.1 741.4 L733.1 743.0 L733.5 743.8 L732.1 741.4 Z M733.7 744.2 L734.8 747.0 L733.5 743.8 L733.7 744.2 Z M734.8 747.0 L735.5 750.1 L735.7 752.4 L734.8 747.0 Z M735.7 752.4 L735.8 753.8 L735.8 797.7 L735.7 752.4 Z M739.2 804.1 L742.2 806.8 L744.5 809.2 L739.2 804.1 Z M744.5 809.2 L746.1 811.2 L747.3 812.9 L744.5 809.2 Z M747.3 812.9 L749.1 815.6 L749.5 816.4 L747.3 812.9 Z M749.5 816.4 L751.0 819.3 L751.7 821.1 L749.5 816.4 Z M751.7 821.1 L752.5 823.1 L753.1 824.9 L751.7 821.1 Z M753.1 824.9 L753.7 827.6 L754.0 829.0 L753.1 824.9 Z M754.0 829.0 L754.4 831.6 L754.6 833.7 L754.0 829.0 Z M754.6 833.7 L754.6 838.9 L754.3 841.7 L754.6 833.7 Z M754.3 841.7 L754.0 843.8 L753.6 845.7 L754.3 841.7 Z M753.6 845.7 L753.1 847.7 L752.5 849.5 L753.6 845.7 Z M752.5 849.5 L751.7 851.6 L751.0 853.3 L752.5 849.5 Z M751.0 853.3 L750.1 855.2 L749.2 856.9 L751.0 853.3 Z M749.2 856.9 L748.0 858.7 L747.0 860.3 L749.2 856.9 Z M747.0 860.3 L745.7 862.0 L744.5 863.5 L747.0 860.3 Z M744.5 863.5 L743.0 865.1 L741.6 866.4 L744.5 863.5 Z M741.6 866.4 L740.0 867.8 L738.6 869.0 L741.6 866.4 Z M738.6 869.0 L736.8 870.3 L735.2 871.3 L738.6 869.0 Z M735.2 871.3 L733.4 872.4 L731.7 873.3 L735.2 871.3 Z M731.7 873.3 L729.8 874.2 L728.0 874.9 L731.7 873.3 Z M728.0 874.9 L726.0 875.6 L724.2 876.1 L728.0 874.9 Z M724.2 876.1 L722.1 876.6 L720.2 877.0 L724.2 876.1 Z M720.2 877.0 L718.1 877.3 L716.0 877.4 L720.2 877.0 Z M716.0 877.4 L712.1 877.5 L710.1 877.4 L716.0 877.4 Z M710.1 877.4 L706.7 877.0 L704.9 876.6 L710.1 877.4 Z M704.9 876.6 L702.2 875.9 L700.1 875.3 L704.9 876.6 Z M700.1 875.3 L696.5 873.9 L694.5 872.9 L700.1 875.3 Z M694.5 872.9 L691.7 871.3 L689.5 869.8 L694.5 872.9 Z M689.5 869.8 L686.8 867.7 L685.3 866.4 L689.5 869.8 Z M685.3 866.4 L683.4 864.5 L682.0 862.9 L685.3 866.4 Z M682.0 862.9 L679.6 859.8 L678.2 857.7 L682.0 862.9 Z M666.0 857.7 L664.2 860.4 L662.3 862.9 L666.0 857.7 Z M662.3 862.9 L660.4 865.0 L659.4 865.9 L662.3 862.9 Z M659.4 865.9 L656.5 868.5 L654.9 869.8 L659.4 865.9 Z M654.9 869.8 L652.6 871.3 L650.8 872.3 L654.9 869.8 Z M650.8 872.3 L647.8 873.9 L646.0 874.6 L650.8 872.3 Z M646.0 874.6 L643.4 875.5 L641.5 876.1 L646.0 874.6 Z M641.5 876.1 L638.1 876.9 L636.3 877.2 L641.5 876.1 Z M636.3 877.2 L633.5 877.4 L631.3 877.5 L636.3 877.2 Z M631.3 877.5 L628.1 877.4 L626.2 877.3 L631.3 877.5 Z M626.2 877.3 L623.4 876.9 L621.5 876.5 L626.2 877.3 Z M621.5 876.5 L618.2 875.5 L616.4 874.9 L621.5 876.5 Z M616.4 874.9 L614.4 874.1 L612.5 873.3 L616.4 874.9 Z M612.5 873.3 L610.2 872.0 L608.4 870.9 L612.5 873.3 Z M608.4 870.9 L605.7 869.0 L604.2 867.8 L608.4 870.9 Z M604.2 867.8 L602.1 865.9 L601.2 865.0 L604.2 867.8 Z M601.2 865.0 L599.9 863.6 L599.5 863.1 L601.2 865.0 Z M678.7 814.2 L680.7 811.3 L682.5 809.2 L678.7 814.2 Z M682.5 809.2 L683.9 807.6 L685.3 806.3 L682.5 809.2 Z M685.3 806.3 L686.9 804.8 L687.9 804.0 L685.3 806.3 Z M552.8 629.2 L549.4 629.5 L547.4 629.5 L552.8 629.2 Z M547.4 629.5 L543.5 629.2 L541.4 628.9 L547.4 629.5 Z M541.4 628.9 L538.8 628.4 L536.7 627.9 L541.4 628.9 Z M536.7 627.9 L533.6 626.8 L531.8 626.1 L536.7 627.9 Z M531.8 626.1 L529.3 625.0 L527.4 623.9 L531.8 626.1 Z M527.4 623.9 L524.6 622.2 L523.0 621.0 L527.4 623.9 Z M523.0 621.0 L520.9 619.2 L518.6 617.0 L523.0 621.0 Z M518.6 617.0 L517.1 615.4 L516.1 614.3 L518.6 617.0 Z M599.5 809.5 L600.6 808.2 L601.2 807.7 L599.5 809.5 Z M601.2 807.7 L603.5 805.4 L604.2 804.8 L601.2 807.7 Z M604.2 804.8 L606.8 802.8 L608.4 801.8 L604.2 804.8 Z M608.4 801.8 L610.7 800.3 L612.5 799.4 L608.4 801.8 Z M612.5 799.4 L615.7 798.0 L617.4 797.3 L612.5 799.4 Z M617.4 797.3 L620.1 796.5 L622.1 796.1 L617.4 797.3 Z M622.1 796.1 L625.3 795.5 L626.2 795.4 L622.1 796.1 Z M626.2 795.4 L629.5 795.1 L631.5 795.1 L626.2 795.4 Z M631.5 795.1 L634.1 795.3 L636.3 795.5 L631.5 795.1 Z M636.3 795.5 L639.5 796.1 L641.5 796.5 L636.3 795.5 Z M641.5 796.5 L644.0 797.3 L646.0 798.0 L641.5 796.5 Z M646.0 798.0 L649.0 799.4 L650.8 800.3 L646.0 798.0 Z M650.8 800.3 L653.1 801.7 L654.9 802.9 L650.8 800.3 Z M654.9 802.9 L657.5 804.9 L659.0 806.3 L654.9 802.9 Z M659.0 806.3 L660.8 808.1 L662.3 809.7 L659.0 806.3 Z M662.3 809.7 L663.5 811.3 L664.4 812.6 L662.3 809.7 Z M338.6 847.7 L333.7 848.3 L329.2 850.2 L325.7 852.9 L321.6 857.4 L325.3 853.0 L328.1 847.7 L338.6 847.7 Z M318.5 860.3 L317.5 860.9 L320.9 858.1 L318.5 860.3 Z M314.8 862.7 L312.7 863.7 L316.1 861.8 L314.8 862.7 Z M310.7 864.6 L307.9 865.4 L311.3 864.3 L310.7 864.6 Z M301.1 866.5 L300.6 866.5 L305.8 866.0 L301.1 866.5 Z M296.6 866.3 L295.3 866.1 L299.2 866.4 L296.6 866.3 Z M291.8 865.4 L290.3 864.8 L293.3 865.7 L291.8 865.4 Z M286.3 863.2 L284.9 862.3 L287.5 863.7 L286.3 863.2 Z M281.3 860.0 L280.1 858.9 L282.4 860.7 L281.3 860.0 Z M277.0 855.9 L276.1 854.5 L278.0 856.7 L277.0 855.9 Z M273.7 851.0 L273.0 849.5 L274.4 852.0 L273.7 851.0 Z M271.3 845.6 L271.0 844.0 L271.8 846.7 L271.3 845.6 Z M270.1 839.8 L270.0 838.2 L270.3 841.0 L270.1 839.8 Z M270.0 833.9 L270.3 832.3 L270.0 835.1 L270.0 833.9 Z M271.0 828.0 L271.7 826.4 L270.8 829.3 L271.0 828.0 Z M273.0 823.0 L273.6 822.0 L272.7 823.7 L273.0 823.0 Z M275.2 819.1 L275.9 818.3 L274.7 820.0 L275.2 819.1 Z M278.0 815.7 L278.9 814.9 L277.4 816.5 L278.0 815.7 Z M281.3 812.7 L282.2 812.0 L280.6 813.4 L281.3 812.7 Z M285.0 810.2 L286.0 809.7 L284.1 810.7 L285.0 810.2 Z M289.0 808.2 L290.3 807.8 L288.0 808.7 L289.0 808.2 Z M293.2 806.9 L294.5 806.7 L292.4 807.2 L293.2 806.9 Z M297.6 806.2 L299.3 806.2 L296.7 806.4 L297.6 806.2 Z M301.1 806.1 L303.4 806.4 L300.6 806.1 L301.1 806.1 Z M305.0 806.5 L306.7 806.9 L304.8 806.5 L305.0 806.5 Z M312.5 808.8 L312.8 809.0 L309.2 807.5 L312.5 808.8 Z M316.4 810.9 L316.7 811.1 L314.9 810.1 L316.4 810.9 Z M319.6 813.3 L319.9 813.6 L318.0 812.1 L319.6 813.3 Z M325.7 819.8 L328.5 822.0 L332.9 824.1 L337.5 825.0 L328.1 825.0 L326.1 820.9 L324.0 818.0 L325.7 819.8 Z M356.8 825.0 L442.8 824.9 L447.6 824.0 L449.8 823.0 L452.6 821.3 L456.0 817.9 L458.5 813.7 L459.6 810.3 L460.0 806.5 L460.0 825.0 L356.8 825.0 Z M458.6 623.7 L456.0 619.2 L452.8 616.0 L450.1 614.3 L455.0 616.6 L460.0 618.0 L460.0 806.5 L459.8 628.4 L458.6 623.7 Z M447.8 612.8 L446.8 612.0 L449.8 614.1 L447.8 612.8 Z M444.8 610.3 L443.0 608.3 L445.6 611.0 L444.8 610.3 Z M439.8 604.2 L439.3 603.3 L442.0 607.3 L439.8 604.2 Z M437.9 600.8 L437.4 599.5 L438.5 601.9 L437.9 600.8 Z M436.4 596.6 L435.9 594.1 L436.8 597.6 L436.4 596.6 Z M435.5 592.2 L435.3 589.1 L435.6 592.6 L435.5 592.2 Z M435.2 587.8 L435.4 586.0 L435.2 587.9 L435.2 587.8 Z M435.9 581.9 L436.4 580.3 L435.9 582.1 L435.9 581.9 Z M437.7 576.3 L440.1 571.8 L437.6 576.6 L437.7 576.3 Z M443.7 567.3 L443.8 567.2 L442.6 568.7 L443.7 567.3 Z M448.2 563.5 L448.4 563.4 L445.8 565.5 L448.2 563.5 Z M453.4 560.6 L453.5 560.6 L451.8 561.5 L453.4 560.6 Z M458.6 558.9 L458.9 558.8 L455.0 560.1 L458.6 558.9 Z M467.9 558.2 L468.9 558.3 L464.4 558.1 L467.9 558.2 Z M471.8 558.8 L473.1 559.1 L470.6 558.6 L471.8 558.8 Z M475.1 559.7 L477.1 560.5 L474.4 559.5 L475.1 559.7 Z M478.8 561.2 L481.9 563.0 L478.5 561.1 L478.8 561.2 Z M485.0 565.3 L485.3 565.6 L482.7 563.6 L485.0 565.3 Z M487.5 567.6 L488.4 568.7 L486.2 566.5 L487.5 567.6 Z M490.8 571.5 L493.6 573.8 L497.9 575.9 L502.6 576.9 L511.8 576.8 L514.5 576.3 L517.6 575.2 L521.6 572.6 L525.8 568.0 L524.0 570.1 L522.1 573.0 L520.1 577.0 L493.4 576.9 L491.4 572.9 L488.8 569.2 L490.8 571.5 Z M527.5 566.3 L528.1 565.7 L527.2 566.5 L527.5 566.3 Z M531.7 562.9 L532.1 562.7 L531.3 563.3 L531.7 562.9 Z M537.0 560.2 L537.6 560.0 L536.8 560.3 L537.0 560.2 Z M543.2 558.5 L543.4 558.5 L542.8 558.6 L543.2 558.5 Z M550.1 558.2 L550.6 558.2 L549.7 558.2 L550.1 558.2 Z M553.5 558.6 L553.8 558.6 L552.7 558.5 L553.5 558.6 Z M557.3 559.5 L557.6 559.6 L556.0 559.2 L557.3 559.5 Z M563.2 562.1 L563.6 562.4 L560.6 561.0 L563.2 562.1 Z M566.5 564.3 L566.8 564.6 L565.3 563.5 L566.5 564.3 Z M569.1 566.6 L569.2 566.7 L568.5 566.1 L569.1 566.6 Z M573.5 571.9 L574.4 573.5 L573.0 571.4 L573.5 571.9 Z M575.2 574.9 L576.1 577.1 L575.0 574.5 L575.2 574.9 Z M577.6 581.9 L577.7 582.2 L576.6 578.4 L577.6 581.9 Z M578.2 585.8 L578.2 586.4 L577.9 583.8 L578.2 585.8 Z M578.3 589.3 L578.2 591.1 L578.3 587.8 L578.3 589.3 Z M577.9 594.4 L578.3 597.9 L579.8 602.5 L582.4 606.5 L720.7 744.9 L575.9 600.0 L577.4 595.8 L578.1 591.5 L577.9 594.4 Z M722.9 747.4 L722.9 747.4 L722.5 746.9 L722.9 747.4 Z M724.3 750.4 L724.5 751.6 L724.3 750.3 L724.3 750.4 Z M724.8 797.8 L725.4 802.4 L726.6 805.8 L728.4 808.9 L731.9 812.4 L728.9 810.3 L724.8 808.3 L724.8 788.5 L724.8 797.8 Z M736.2 816.4 L736.5 816.9 L736.0 816.3 L736.2 816.4 Z M739.9 821.6 L739.9 821.9 L739.6 821.3 L739.9 821.6 Z M742.5 828.0 L742.9 829.7 L742.3 827.5 L742.5 828.0 Z M743.3 831.4 L743.5 834.2 L743.2 830.9 L743.3 831.4 Z M743.6 835.3 L743.6 835.7 L743.6 835.2 L743.6 835.3 Z M743.3 841.2 L743.0 842.1 L743.3 840.6 L743.3 841.2 Z M741.7 847.0 L741.5 847.4 L742.0 846.1 L741.7 847.0 Z M739.1 852.3 L738.8 852.7 L739.2 852.2 L739.1 852.3 Z M735.5 857.0 L734.8 857.6 L735.9 856.4 L735.5 857.0 Z M731.1 860.9 L730.7 861.1 L731.8 860.3 L731.1 860.9 Z M725.9 863.8 L725.4 864.0 L726.0 863.8 L725.9 863.8 Z M720.3 865.7 L719.4 865.9 L721.0 865.5 L720.3 865.7 Z M714.4 866.5 L713.9 866.5 L715.4 866.4 L714.4 866.5 Z M710.0 866.3 L709.4 866.2 L711.6 866.4 L710.0 866.3 Z M706.6 865.7 L705.6 865.4 L708.0 866.0 L706.6 865.7 Z M702.4 864.4 L701.3 863.9 L703.4 864.7 L702.4 864.4 Z M698.8 862.7 L697.7 862.0 L699.7 863.1 L698.8 862.7 Z M695.1 860.3 L693.6 859.0 L695.8 860.8 L695.1 860.3 Z M692.5 858.0 L691.5 857.0 L692.7 858.3 L692.5 858.0 Z M689.8 855.1 L689.1 854.2 L690.0 855.3 L689.8 855.1 Z M686.2 850.1 L683.0 847.1 L678.4 844.7 L676.1 844.0 L672.9 843.6 L670.1 843.7 L667.0 844.3 L664.4 845.3 L661.6 846.9 L658.0 850.1 L656.1 852.8 L658.0 849.5 L659.3 846.4 L660.4 842.5 L660.9 839.1 L661.0 835.1 L660.6 831.8 L659.8 827.8 L658.6 824.5 L655.4 818.8 L658.0 822.5 L660.3 824.8 L662.6 826.4 L665.5 827.8 L668.1 828.6 L671.3 829.0 L674.1 828.9 L677.3 828.3 L680.9 826.8 L684.8 824.0 L688.3 819.7 L686.9 822.0 L685.1 825.9 L684.1 829.2 L683.4 833.5 L683.3 836.6 L683.5 840.5 L685.1 846.8 L686.7 850.3 L688.3 852.9 L686.2 850.1 Z M690.8 816.4 L691.2 816.0 L690.2 817.1 L690.8 816.4 Z M696.9 810.7 L699.2 807.9 L701.2 803.5 L702.1 799.2 L702.1 775.9 L702.1 808.3 L698.2 810.3 L695.3 812.2 L696.9 810.7 Z M701.9 763.4 L701.2 760.2 L700.1 757.7 L698.4 754.9 L565.4 621.8 L561.5 619.6 L557.8 618.4 L554.5 618.1 L548.4 618.5 L554.1 617.9 L559.9 616.1 L702.1 758.3 L702.1 765.9 L701.9 763.4 Z M544.7 618.3 L543.2 618.0 L547.7 618.4 L544.7 618.3 Z M540.3 617.5 L537.6 616.5 L541.5 617.7 L540.3 617.5 Z M532.2 613.9 L531.8 613.7 L536.4 616.1 L532.2 613.9 Z M528.6 611.3 L527.1 609.9 L530.7 612.9 L528.6 611.3 Z M522.7 605.1 L520.6 603.3 L517.6 601.4 L514.2 600.2 L510.0 599.6 L520.1 599.7 L522.9 605.0 L526.5 609.3 L522.7 605.1 Z M501.4 599.8 L497.1 600.9 L492.9 603.3 L490.0 606.0 L485.1 612.1 L483.3 616.4 L482.6 621.3 L482.6 806.7 L482.9 809.9 L483.7 812.6 L485.0 815.6 L486.3 817.6 L488.8 820.3 L492.0 822.6 L495.4 824.1 L499.7 824.9 L593.7 824.9 L598.3 824.0 L602.6 821.8 L605.4 819.5 L608.1 816.4 L605.0 820.6 L602.8 825.0 L482.6 825.0 L482.6 613.1 L485.8 610.6 L488.9 607.3 L491.4 603.7 L493.4 599.6 L508.7 599.6 L501.4 599.8 Z M611.2 813.3 L611.6 813.1 L608.5 816.0 L611.2 813.3 Z M614.4 810.9 L615.8 810.2 L612.6 812.3 L614.4 810.9 Z M617.4 809.2 L619.9 808.2 L616.8 809.6 L617.4 809.2 Z M624.4 806.8 L624.7 806.8 L620.9 807.8 L624.4 806.8 Z M631.3 806.1 L635.1 806.5 L631.0 806.2 L631.3 806.1 Z M638.6 807.2 L638.9 807.3 L637.2 806.9 L638.6 807.2 Z M642.8 808.6 L646.0 810.2 L642.7 808.6 L642.8 808.6 Z M651.8 814.6 L652.0 814.8 L649.1 812.3 L651.8 814.6 Z M654.4 817.6 L654.7 817.9 L653.4 816.3 L654.4 817.6 Z M654.4 855.1 L654.2 855.3 L655.4 853.8 L654.4 855.1 Z M651.8 858.0 L651.4 858.4 L653.0 856.7 L651.8 858.0 Z M648.4 860.9 L648.1 861.1 L649.3 860.1 L648.4 860.9 Z M645.5 862.7 L645.2 862.8 L646.4 862.1 L645.5 862.7 Z M641.9 864.4 L641.5 864.5 L643.4 863.7 L641.9 864.4 Z M638.6 865.5 L638.4 865.5 L639.7 865.1 L638.6 865.5 Z M634.7 866.3 L634.4 866.3 L636.3 865.9 L634.7 866.3 Z M631.3 866.5 L631.0 866.5 L632.6 866.4 L631.3 866.5 Z M627.3 866.3 L626.7 866.2 L629.1 866.4 L627.3 866.3 Z M623.9 865.7 L623.3 865.5 L625.4 866.0 L623.9 865.7 Z M614.4 861.7 L614.2 861.5 L617.5 863.4 L614.4 861.7 Z M611.2 859.4 L611.0 859.1 L612.9 860.5 L611.2 859.4 Z M605.2 852.9 L602.3 850.6 L598.0 848.6 L593.4 847.7 L602.8 847.7 L604.8 851.7 L606.9 854.7 L605.2 852.9 Z M319.8 833.8 L321.7 835.3 L319.9 835.3 L319.8 833.8 Z M468.5 835.1 L470.0 833.6 L470.3 833.0 L470.3 835.3 L467.9 835.3 L468.5 835.1 Z M470.3 610.5 L468.5 608.4 L467.6 608.0 L470.3 607.5 L470.3 610.5 Z M485.1 585.8 L487.0 587.3 L485.3 587.3 L485.1 585.8 Z M526.5 587.3 L528.4 585.9 L528.3 587.3 L526.5 587.3 Z M563.8 600.5 L564.0 602.8 L562.8 601.6 L563.8 600.5 Z M714.4 814.7 L715.9 816.6 L714.4 816.5 L714.4 814.7 Z M711.0 816.6 L712.5 814.7 L712.5 816.5 L711.0 816.6 Z M562.7 604.2 L560.3 604.0 L561.4 603.0 L562.7 604.2 Z M528.4 590.8 L526.5 589.3 L528.3 589.3 L528.4 590.8 Z M487.0 589.3 L485.1 590.7 L485.3 589.3 L487.0 589.3 Z M472.3 607.6 L472.3 606.9 L472.8 606.7 L472.3 607.6 Z M472.5 833.6 L474.1 835.1 L474.7 835.3 L472.3 835.3 L472.3 832.9 L472.5 833.6 Z M609.2 835.3 L611.1 833.9 L611.0 835.3 L609.2 835.3 Z M611.1 838.8 L609.2 837.3 L611.0 837.3 L611.1 838.8 Z M321.7 837.3 L319.8 838.8 L319.9 837.3 L321.7 837.3 Z " fill="#fff" fill-rule="evenodd"/><path d="M336.2 859.0 L334.0 860.2 L328.2 866.5 L321.9 871.3 L316.5 874.1 L310.6 876.2 L303.4 877.4 L295.5 877.3 L288.7 875.9 L282.0 873.3 L278.3 871.3 L275.1 869.1 L269.9 864.4 L265.1 858.1 L261.7 851.4 L259.6 843.8 L258.9 836.9 L259.5 829.0 L260.5 825.0 L261.7 821.2 L264.1 816.3 L267.4 811.2 L271.4 806.7 L276.0 802.9 L280.2 800.3 L285.7 797.7 L291.4 796.1 L297.5 795.2 L302.7 795.2 L307.4 795.8 L312.6 797.1 L317.2 798.8 L321.7 801.3 L325.8 804.1 L329.6 807.6 L334.0 812.5 L335.7 813.4 L337.6 813.9 L441.4 814.0 L442.9 813.8 L444.8 813.2 L447.4 811.1 L448.6 808.9 L449.0 806.4 L448.9 629.7 L448.2 627.4 L447.1 625.7 L445.6 624.4 L440.4 621.0 L436.7 617.8 L432.8 613.4 L429.4 608.3 L427.1 603.4 L425.3 597.6 L424.4 591.6 L424.3 585.7 L425.3 578.8 L427.6 571.9 L431.5 564.9 L435.9 559.6 L441.5 554.8 L448.3 550.8 L454.9 548.5 L458.7 547.6 L462.8 547.2 L468.0 547.2 L472.8 547.7 L477.9 549.0 L482.5 550.8 L487.1 553.2 L491.1 556.1 L495.0 559.6 L499.4 564.4 L501.1 565.4 L503.0 565.9 L510.1 565.9 L512.5 565.4 L514.9 563.8 L518.5 559.7 L521.5 556.8 L528.1 552.3 L531.7 550.5 L535.6 549.0 L540.6 547.8 L544.6 547.2 L548.8 547.1 L553.5 547.4 L557.4 548.2 L561.5 549.3 L566.2 551.3 L569.8 553.2 L573.2 555.6 L576.8 558.8 L580.3 562.6 L583.1 566.5 L585.1 570.2 L587.1 575.1 L588.4 579.7 L589.2 584.8 L589.3 589.0 L589.0 595.4 L589.7 597.8 L590.8 599.4 L729.1 737.7 L732.1 741.4 L733.5 743.8 L734.8 747.0 L735.7 752.4 L735.8 797.7 L736.0 799.7 L737.3 802.4 L744.5 809.2 L747.3 812.9 L749.5 816.4 L751.7 821.1 L753.1 824.9 L754.0 829.0 L754.6 833.7 L754.3 841.7 L753.6 845.7 L752.5 849.5 L751.0 853.3 L749.2 856.9 L747.0 860.3 L744.5 863.5 L741.6 866.4 L738.6 869.0 L735.2 871.3 L731.7 873.3 L728.0 874.9 L724.2 876.1 L720.2 877.0 L716.0 877.4 L710.1 877.4 L704.9 876.6 L700.1 875.3 L694.5 872.9 L689.5 869.8 L685.3 866.4 L682.0 862.9 L678.2 857.7 L676.9 856.3 L674.8 855.1 L672.4 854.6 L669.5 855.1 L667.4 856.3 L666.0 857.7 L662.3 862.9 L659.4 865.9 L654.9 869.8 L650.8 872.3 L646.0 874.6 L641.5 876.1 L636.3 877.2 L631.3 877.5 L626.2 877.3 L621.5 876.5 L616.4 874.9 L612.5 873.3 L608.4 870.9 L604.2 867.8 L601.2 865.0 L596.8 860.2 L594.7 859.0 L592.8 858.7 L338.7 858.7 L336.2 859.0 Z M325.3 853.0 L321.6 857.4 L325.7 852.9 L329.2 850.2 L333.7 848.3 L338.6 847.7 L328.1 847.7 L325.3 853.0 Z M317.5 860.9 L318.5 860.3 L320.9 858.1 L317.5 860.9 Z M312.7 863.7 L314.8 862.7 L316.1 861.8 L312.7 863.7 Z M307.9 865.4 L310.7 864.6 L311.3 864.3 L307.9 865.4 Z M300.6 866.5 L301.1 866.5 L305.8 866.0 L300.6 866.5 Z M295.3 866.1 L296.6 866.3 L299.2 866.4 L295.3 866.1 Z M290.3 864.8 L291.8 865.4 L293.3 865.7 L290.3 864.8 Z M284.9 862.3 L286.3 863.2 L287.5 863.7 L284.9 862.3 Z M280.1 858.9 L281.3 860.0 L282.4 860.7 L280.1 858.9 Z M276.1 854.5 L277.0 855.9 L278.0 856.7 L276.1 854.5 Z M273.0 849.5 L273.7 851.0 L274.4 852.0 L273.0 849.5 Z M271.0 844.0 L271.3 845.6 L271.8 846.7 L271.0 844.0 Z M270.0 838.2 L270.1 839.8 L270.3 841.0 L270.0 838.2 Z M270.3 832.3 L270.0 833.9 L270.0 835.1 L270.3 832.3 Z M271.7 826.4 L271.0 828.0 L270.8 829.3 L271.7 826.4 Z M273.6 822.0 L273.0 823.0 L272.7 823.7 L273.6 822.0 Z M275.9 818.3 L275.2 819.1 L274.7 820.0 L275.9 818.3 Z M278.9 814.9 L278.0 815.7 L277.4 816.5 L278.9 814.9 Z M282.2 812.0 L281.3 812.7 L280.6 813.4 L282.2 812.0 Z M286.0 809.7 L285.0 810.2 L284.1 810.7 L286.0 809.7 Z M290.3 807.8 L289.0 808.2 L288.0 808.7 L290.3 807.8 Z M294.5 806.7 L293.2 806.9 L292.4 807.2 L294.5 806.7 Z M299.3 806.2 L297.6 806.2 L296.7 806.4 L299.3 806.2 Z M303.4 806.4 L301.1 806.1 L300.6 806.1 L303.4 806.4 Z M306.7 806.9 L305.0 806.5 L304.8 806.5 L306.7 806.9 Z M312.8 809.0 L312.5 808.8 L309.2 807.5 L312.8 809.0 Z M316.7 811.1 L316.4 810.9 L314.9 810.1 L316.7 811.1 Z M319.9 813.6 L319.6 813.3 L318.0 812.1 L319.9 813.6 Z M326.1 820.9 L328.1 825.0 L337.5 825.0 L332.9 824.1 L328.5 822.0 L325.7 819.8 L324.0 818.0 L326.1 820.9 Z M460.0 825.0 L460.0 806.5 L459.6 810.3 L458.5 813.7 L456.0 817.9 L452.6 821.3 L449.8 823.0 L447.6 824.0 L442.8 824.9 L356.8 825.0 L460.0 825.0 Z M460.0 618.0 L455.0 616.6 L450.1 614.3 L452.8 616.0 L456.0 619.2 L458.6 623.7 L459.8 628.4 L460.0 806.5 L460.0 618.0 Z M446.8 612.0 L447.8 612.8 L449.8 614.1 L446.8 612.0 Z M443.0 608.3 L444.8 610.3 L445.6 611.0 L443.0 608.3 Z M439.3 603.3 L439.8 604.2 L442.0 607.3 L439.3 603.3 Z M437.4 599.5 L437.9 600.8 L438.5 601.9 L437.4 599.5 Z M435.9 594.1 L436.4 596.6 L436.8 597.6 L435.9 594.1 Z M435.3 589.1 L435.5 592.2 L435.6 592.6 L435.3 589.1 Z M435.4 586.0 L435.2 587.8 L435.2 587.9 L435.4 586.0 Z M436.4 580.3 L435.9 581.9 L435.9 582.1 L436.4 580.3 Z M440.1 571.8 L437.7 576.3 L437.6 576.6 L440.1 571.8 Z M443.8 567.2 L443.7 567.3 L442.6 568.7 L443.8 567.2 Z M448.4 563.4 L448.2 563.5 L445.8 565.5 L448.4 563.4 Z M453.5 560.6 L453.4 560.6 L451.8 561.5 L453.5 560.6 Z M458.9 558.8 L458.6 558.9 L455.0 560.1 L458.9 558.8 Z M468.9 558.3 L467.9 558.2 L464.4 558.1 L468.9 558.3 Z M473.1 559.1 L471.8 558.8 L470.6 558.6 L473.1 559.1 Z M477.1 560.5 L475.1 559.7 L474.4 559.5 L477.1 560.5 Z M481.9 563.0 L478.8 561.2 L478.5 561.1 L481.9 563.0 Z M485.3 565.6 L485.0 565.3 L482.7 563.6 L485.3 565.6 Z M488.4 568.7 L487.5 567.6 L486.2 566.5 L488.4 568.7 Z M491.4 572.9 L493.4 576.9 L520.1 577.0 L522.1 573.0 L524.0 570.1 L525.8 568.0 L521.6 572.6 L517.6 575.2 L514.5 576.3 L511.8 576.8 L502.6 576.9 L497.9 575.9 L493.6 573.8 L490.8 571.5 L488.8 569.2 L491.4 572.9 Z M528.1 565.7 L527.5 566.3 L527.2 566.5 L528.1 565.7 Z M532.1 562.7 L531.7 562.9 L531.3 563.3 L532.1 562.7 Z M537.6 560.0 L537.0 560.2 L536.8 560.3 L537.6 560.0 Z M543.4 558.5 L543.2 558.5 L542.8 558.6 L543.4 558.5 Z M550.6 558.2 L550.1 558.2 L549.7 558.2 L550.6 558.2 Z M553.8 558.6 L553.5 558.6 L552.7 558.5 L553.8 558.6 Z M557.6 559.6 L557.3 559.5 L556.0 559.2 L557.6 559.6 Z M563.6 562.4 L563.2 562.1 L560.6 561.0 L563.6 562.4 Z M566.8 564.6 L566.5 564.3 L565.3 563.5 L566.8 564.6 Z M569.2 566.7 L569.1 566.6 L568.5 566.1 L569.2 566.7 Z M574.4 573.5 L573.5 571.9 L573.0 571.4 L574.4 573.5 Z M576.1 577.1 L575.2 574.9 L575.0 574.5 L576.1 577.1 Z M577.7 582.2 L577.6 581.9 L576.6 578.4 L577.7 582.2 Z M578.2 586.4 L578.2 585.8 L577.9 583.8 L578.2 586.4 Z M578.2 591.1 L578.3 589.3 L578.3 587.8 L578.2 591.1 Z M577.4 595.8 L575.9 600.0 L720.7 744.9 L582.4 606.5 L579.8 602.5 L578.3 597.9 L577.9 594.4 L578.1 591.5 L577.4 595.8 Z M722.9 747.4 L722.9 747.4 L722.5 746.9 L722.9 747.4 Z M724.5 751.6 L724.3 750.4 L724.3 750.3 L724.5 751.6 Z M724.8 808.3 L728.9 810.3 L731.9 812.4 L728.4 808.9 L726.6 805.8 L725.4 802.4 L724.8 797.8 L724.8 788.5 L724.8 808.3 Z M736.5 816.9 L736.2 816.4 L736.0 816.3 L736.5 816.9 Z M739.9 821.9 L739.9 821.6 L739.6 821.3 L739.9 821.9 Z M742.9 829.7 L742.5 828.0 L742.3 827.5 L742.9 829.7 Z M743.5 834.2 L743.3 831.4 L743.2 830.9 L743.5 834.2 Z M743.6 835.7 L743.6 835.3 L743.6 835.2 L743.6 835.7 Z M743.0 842.1 L743.3 841.2 L743.3 840.6 L743.0 842.1 Z M741.5 847.4 L741.7 847.0 L742.0 846.1 L741.5 847.4 Z M738.8 852.7 L739.1 852.3 L739.2 852.2 L738.8 852.7 Z M734.8 857.6 L735.5 857.0 L735.9 856.4 L734.8 857.6 Z M730.7 861.1 L731.1 860.9 L731.8 860.3 L730.7 861.1 Z M725.4 864.0 L725.9 863.8 L726.0 863.8 L725.4 864.0 Z M719.4 865.9 L720.3 865.7 L721.0 865.5 L719.4 865.9 Z M713.9 866.5 L714.4 866.5 L715.4 866.4 L713.9 866.5 Z M709.4 866.2 L710.0 866.3 L711.6 866.4 L709.4 866.2 Z M705.6 865.4 L706.6 865.7 L708.0 866.0 L705.6 865.4 Z M701.3 863.9 L702.4 864.4 L703.4 864.7 L701.3 863.9 Z M697.7 862.0 L698.8 862.7 L699.7 863.1 L697.7 862.0 Z M693.6 859.0 L695.1 860.3 L695.8 860.8 L693.6 859.0 Z M691.5 857.0 L692.5 858.0 L692.7 858.3 L691.5 857.0 Z M689.1 854.2 L689.8 855.1 L690.0 855.3 L689.1 854.2 Z M686.7 850.3 L685.1 846.8 L683.5 840.5 L683.3 836.6 L683.4 833.5 L684.1 829.2 L685.1 825.9 L686.9 822.0 L688.3 819.7 L684.8 824.0 L680.9 826.8 L677.3 828.3 L674.1 828.9 L671.3 829.0 L668.1 828.6 L665.5 827.8 L662.6 826.4 L660.3 824.8 L658.0 822.5 L655.4 818.8 L658.6 824.5 L659.8 827.8 L660.6 831.8 L661.0 835.1 L660.9 839.1 L660.4 842.5 L659.3 846.4 L658.0 849.5 L656.1 852.8 L658.0 850.1 L661.6 846.9 L664.4 845.3 L667.0 844.3 L670.1 843.7 L672.9 843.6 L676.1 844.0 L678.4 844.7 L683.0 847.1 L686.2 850.1 L688.3 852.9 L686.7 850.3 Z M691.2 816.0 L690.8 816.4 L690.2 817.1 L691.2 816.0 Z M698.2 810.3 L702.1 808.3 L702.1 775.9 L702.1 799.2 L701.2 803.5 L699.2 807.9 L696.9 810.7 L695.3 812.2 L698.2 810.3 Z M702.1 758.3 L559.9 616.1 L554.1 617.9 L548.4 618.5 L554.5 618.1 L557.8 618.4 L561.5 619.6 L565.4 621.8 L698.4 754.9 L700.1 757.7 L701.2 760.2 L701.9 763.4 L702.1 765.9 L702.1 758.3 Z M543.2 618.0 L544.7 618.3 L547.7 618.4 L543.2 618.0 Z M537.6 616.5 L540.3 617.5 L541.5 617.7 L537.6 616.5 Z M531.8 613.7 L532.2 613.9 L536.4 616.1 L531.8 613.7 Z M527.1 609.9 L528.6 611.3 L530.7 612.9 L527.1 609.9 Z M522.9 605.0 L520.1 599.7 L510.0 599.6 L514.2 600.2 L517.6 601.4 L520.6 603.3 L522.7 605.1 L526.5 609.3 L522.9 605.0 Z M493.4 599.6 L491.4 603.7 L488.9 607.3 L485.8 610.6 L482.6 613.1 L482.6 825.0 L602.8 825.0 L605.0 820.6 L608.1 816.4 L605.4 819.5 L602.6 821.8 L598.3 824.0 L593.7 824.9 L499.7 824.9 L495.4 824.1 L492.0 822.6 L488.8 820.3 L486.3 817.6 L485.0 815.6 L483.7 812.6 L482.9 809.9 L482.6 806.7 L482.6 621.3 L483.3 616.4 L485.1 612.1 L490.0 606.0 L492.9 603.3 L497.1 600.9 L501.4 599.8 L508.7 599.6 L493.4 599.6 Z M611.6 813.1 L611.2 813.3 L608.5 816.0 L611.6 813.1 Z M615.8 810.2 L614.4 810.9 L612.6 812.3 L615.8 810.2 Z M619.9 808.2 L617.4 809.2 L616.8 809.6 L619.9 808.2 Z M624.7 806.8 L624.4 806.8 L620.9 807.8 L624.7 806.8 Z M635.1 806.5 L631.3 806.1 L631.0 806.2 L635.1 806.5 Z M638.9 807.3 L638.6 807.2 L637.2 806.9 L638.9 807.3 Z M646.0 810.2 L642.8 808.6 L642.7 808.6 L646.0 810.2 Z M652.0 814.8 L651.8 814.6 L649.1 812.3 L652.0 814.8 Z M654.7 817.9 L654.4 817.6 L653.4 816.3 L654.7 817.9 Z M654.2 855.3 L654.4 855.1 L655.4 853.8 L654.2 855.3 Z M651.4 858.4 L651.8 858.0 L653.0 856.7 L651.4 858.4 Z M648.1 861.1 L648.4 860.9 L649.3 860.1 L648.1 861.1 Z M645.2 862.8 L645.5 862.7 L646.4 862.1 L645.2 862.8 Z M641.5 864.5 L641.9 864.4 L643.4 863.7 L641.5 864.5 Z M638.4 865.5 L638.6 865.5 L639.7 865.1 L638.4 865.5 Z M634.4 866.3 L634.7 866.3 L636.3 865.9 L634.4 866.3 Z M631.0 866.5 L631.3 866.5 L632.6 866.4 L631.0 866.5 Z M626.7 866.2 L627.3 866.3 L629.1 866.4 L626.7 866.2 Z M623.3 865.5 L623.9 865.7 L625.4 866.0 L623.3 865.5 Z M614.2 861.5 L614.4 861.7 L617.5 863.4 L614.2 861.5 Z M611.0 859.1 L611.2 859.4 L612.9 860.5 L611.0 859.1 Z M604.8 851.7 L602.8 847.7 L593.4 847.7 L598.0 848.6 L602.3 850.6 L605.2 852.9 L606.9 854.7 L604.8 851.7 Z M319.6 839.0 L321.1 837.5 L323.0 836.8 L324.1 836.6 L606.8 836.6 L608.8 837.1 L610.6 838.2 L611.3 839.0 L614.3 846.1 L615.9 848.5 L617.8 850.5 L621.7 853.2 L626.1 854.9 L629.0 855.4 L631.8 855.5 L634.6 855.1 L637.3 854.4 L639.9 853.2 L642.3 851.7 L644.4 849.9 L646.7 847.0 L648.9 842.7 L649.6 840.0 L650.0 837.3 L649.6 832.6 L648.1 828.1 L646.8 825.7 L645.1 823.5 L641.5 820.4 L637.2 818.2 L632.6 817.2 L629.0 817.2 L625.3 817.9 L621.8 819.4 L619.3 820.9 L616.6 823.4 L614.3 826.4 L611.3 833.7 L609.7 835.1 L607.8 835.9 L477.1 836.0 L476.0 835.9 L474.1 835.1 L472.5 833.6 L471.7 831.6 L471.6 830.5 L471.6 610.1 L472.0 608.1 L473.0 606.4 L478.3 602.6 L481.4 599.0 L482.8 596.4 L485.0 590.9 L485.7 590.1 L487.4 589.0 L489.4 588.6 L525.2 588.7 L527.1 589.5 L528.6 591.0 L531.1 597.3 L533.8 601.1 L536.7 603.8 L540.7 606.0 L545.2 607.3 L549.1 607.5 L553.7 606.6 L560.1 604.0 L562.1 604.0 L564.0 604.8 L711.5 752.2 L712.7 754.0 L713.1 756.1 L713.0 813.4 L712.2 815.3 L710.8 816.8 L706.1 818.6 L702.8 820.3 L699.8 822.8 L697.5 825.7 L695.4 829.8 L694.5 833.4 L694.3 837.3 L694.9 841.1 L696.1 844.6 L698.0 847.7 L699.9 849.9 L702.7 852.3 L706.1 854.0 L708.9 855.0 L712.6 855.5 L716.2 855.3 L719.1 854.7 L722.6 853.2 L725.6 851.2 L728.3 848.6 L730.0 846.1 L731.5 842.9 L732.4 839.2 L732.7 836.3 L732.4 833.4 L731.6 829.9 L730.4 827.2 L728.3 824.2 L726.3 822.0 L723.4 819.9 L716.1 816.8 L714.7 815.3 L713.9 813.4 L713.7 753.5 L565.3 605.0 L564.1 603.3 L563.7 601.2 L563.8 600.2 L565.9 595.6 L566.8 592.9 L567.3 589.3 L567.2 586.3 L566.5 582.8 L565.4 580.0 L563.6 576.9 L561.6 574.7 L557.9 571.8 L553.6 569.9 L549.1 569.1 L544.4 569.4 L541.7 570.2 L539.1 571.3 L536.7 572.8 L534.6 574.7 L532.7 576.8 L531.2 579.2 L528.6 585.7 L527.9 586.5 L526.1 587.6 L524.1 588.0 L489.4 588.0 L488.4 587.9 L486.4 587.1 L484.9 585.6 L483.1 580.9 L481.9 578.4 L479.7 575.4 L477.6 573.4 L474.5 571.4 L471.8 570.2 L468.3 569.3 L465.4 569.1 L461.6 569.5 L458.0 570.6 L454.7 572.4 L451.8 574.8 L449.4 577.7 L447.7 581.0 L446.6 584.6 L446.2 588.4 L446.6 592.1 L447.7 595.7 L449.5 599.0 L451.9 601.9 L454.8 604.3 L458.1 606.1 L461.8 607.1 L466.5 607.6 L468.5 608.4 L470.0 609.9 L470.5 610.9 L471.0 613.0 L471.0 830.5 L470.5 832.6 L470.0 833.6 L468.5 835.1 L466.5 835.9 L465.5 836.0 L323.0 835.9 L321.1 835.1 L319.6 833.6 L317.8 828.9 L316.5 826.4 L314.4 823.5 L312.2 821.4 L309.2 819.4 L306.6 818.3 L303.8 817.5 L300.1 817.1 L297.3 817.3 L294.4 818.0 L291.1 819.4 L288.6 820.9 L285.9 823.4 L284.1 825.7 L282.4 828.9 L281.4 831.7 L280.9 835.4 L281.1 839.2 L282.0 842.9 L283.6 846.3 L285.9 849.3 L288.7 851.8 L291.9 853.7 L295.5 855.0 L299.2 855.5 L303.0 855.3 L306.6 854.4 L310.0 852.8 L313.0 850.5 L315.5 847.7 L317.5 844.5 L319.6 839.0 Z M667.4 816.4 L670.0 817.7 L672.9 818.0 L675.6 817.2 L677.6 815.7 L682.5 809.2 L685.3 806.3 L689.0 803.1 L690.6 800.7 L691.1 797.7 L691.1 765.5 L690.6 763.1 L689.3 761.1 L558.8 630.7 L556.7 629.5 L554.8 629.1 L547.4 629.5 L541.4 628.9 L536.7 627.9 L531.8 626.1 L527.4 623.9 L523.0 621.0 L518.6 617.0 L514.5 612.5 L512.0 611.0 L510.1 610.6 L503.0 610.7 L501.1 611.2 L499.0 612.5 L494.7 617.6 L493.9 619.5 L493.6 621.5 L493.6 806.4 L494.0 808.9 L495.5 811.4 L498.3 813.4 L501.2 814.0 L593.2 813.9 L595.1 813.4 L596.8 812.5 L601.2 807.7 L604.2 804.8 L608.4 801.8 L612.5 799.4 L617.4 797.3 L622.1 796.1 L626.2 795.4 L631.5 795.1 L636.3 795.5 L641.5 796.5 L646.0 798.0 L650.8 800.3 L654.9 802.9 L659.0 806.3 L662.3 809.7 L667.4 816.4 Z " fill="#5e6cff" fill-rule="evenodd"/><path d="M328.1 847.7 L325.3 853.0 L321.5 857.6 L317.0 861.4 L311.8 864.2 L306.1 865.9 L300.2 866.5 L294.3 866.0 L288.6 864.3 L283.4 861.5 L278.8 857.8 L275.0 853.2 L272.2 848.0 L270.5 842.3 L269.9 836.5 L270.4 830.6 L272.1 824.9 L274.1 820.9 L276.6 817.3 L279.7 814.0 L283.2 811.3 L287.0 809.1 L291.4 807.4 L295.8 806.4 L300.2 806.1 L304.6 806.5 L309.0 807.5 L313.1 809.1 L317.0 811.3 L320.5 814.0 L323.5 817.3 L326.1 820.9 L328.1 825.0 L460.0 825.0 L460.0 618.0 L455.0 616.6 L450.0 614.3 L446.1 611.5 L442.2 607.6 L438.9 602.8 L436.9 598.3 L435.6 593.0 L435.2 588.0 L435.8 582.3 L437.5 576.9 L440.2 571.6 L443.9 567.1 L448.5 563.3 L453.6 560.5 L459.3 558.7 L464.2 558.1 L469.6 558.4 L473.9 559.3 L478.2 560.9 L482.0 563.0 L485.6 565.8 L488.7 569.0 L491.4 572.9 L493.4 576.9 L520.1 577.0 L522.1 573.0 L524.0 570.1 L526.8 566.8 L529.9 564.2 L532.8 562.2 L536.4 560.4 L540.5 559.1 L543.9 558.4 L547.8 558.1 L551.2 558.2 L554.3 558.7 L558.0 559.8 L563.9 562.5 L567.1 564.8 L569.4 566.8 L572.3 570.2 L574.8 574.2 L576.6 578.2 L577.8 582.5 L578.3 586.9 L578.2 591.4 L577.4 595.8 L575.9 600.0 L721.5 745.6 L723.0 747.5 L724.3 750.2 L724.8 753.2 L724.8 808.3 L728.9 810.3 L732.5 812.9 L735.8 815.9 L738.4 819.3 L740.2 822.3 L742.0 826.4 L743.1 830.6 L743.6 835.1 L743.5 839.4 L742.7 843.8 L741.3 848.0 L739.3 852.0 L736.7 855.6 L733.6 858.8 L730.1 861.5 L726.3 863.7 L722.1 865.3 L717.8 866.2 L713.3 866.5 L708.9 866.2 L704.6 865.2 L700.4 863.6 L696.6 861.4 L693.0 858.5 L690.3 855.7 L688.4 853.2 L686.7 850.3 L685.1 846.8 L683.5 840.5 L683.3 836.6 L683.4 833.5 L684.1 829.2 L685.1 825.9 L686.9 822.0 L689.3 818.2 L692.0 815.1 L695.3 812.2 L698.2 810.3 L702.1 808.3 L702.1 758.3 L559.9 616.1 L554.1 617.9 L548.2 618.5 L542.3 617.9 L536.7 616.2 L531.4 613.5 L526.7 609.6 L522.9 605.0 L520.1 599.7 L493.4 599.6 L491.4 603.7 L488.9 607.3 L485.8 610.6 L482.6 613.1 L482.6 825.0 L602.8 825.0 L605.0 820.6 L608.3 816.1 L611.8 812.8 L616.3 809.8 L620.7 807.8 L625.2 806.6 L630.5 806.1 L635.5 806.5 L639.3 807.3 L642.5 808.5 L646.1 810.3 L649.0 812.2 L652.2 815.1 L654.9 818.1 L656.8 821.0 L658.6 824.5 L659.8 827.8 L660.6 831.8 L661.0 835.1 L660.9 839.1 L660.4 842.5 L659.3 846.4 L658.0 849.5 L656.0 853.0 L654.0 855.7 L651.0 858.8 L647.8 861.3 L644.9 863.0 L641.2 864.7 L638.0 865.7 L634.0 866.4 L630.5 866.5 L626.2 866.2 L621.9 865.2 L617.7 863.6 L613.9 861.4 L610.4 858.6 L607.4 855.4 L604.8 851.7 L602.8 847.7 L328.1 847.7 Z M317.5 844.5 L319.6 839.0 L321.1 837.5 L323.0 836.8 L324.1 836.6 L606.8 836.6 L608.8 837.1 L610.6 838.2 L611.3 839.0 L614.3 846.1 L615.9 848.5 L617.8 850.5 L621.7 853.2 L626.1 854.9 L629.0 855.4 L631.8 855.5 L634.6 855.1 L637.3 854.4 L639.9 853.2 L642.3 851.7 L644.4 849.9 L646.7 847.0 L648.9 842.7 L649.6 840.0 L650.0 837.3 L649.6 832.6 L648.1 828.1 L646.8 825.7 L645.1 823.5 L641.5 820.4 L637.2 818.2 L632.6 817.2 L629.0 817.2 L625.3 817.9 L621.8 819.4 L619.3 820.9 L616.6 823.4 L614.3 826.4 L611.3 833.7 L609.7 835.1 L607.8 835.9 L477.1 836.0 L476.0 835.9 L474.1 835.1 L472.5 833.6 L471.7 831.6 L471.6 830.5 L471.6 610.1 L472.0 608.1 L473.0 606.4 L478.3 602.6 L481.4 599.0 L482.8 596.4 L485.0 590.9 L485.7 590.1 L487.4 589.0 L489.4 588.6 L525.2 588.7 L527.1 589.5 L528.6 591.0 L531.1 597.3 L533.8 601.1 L536.7 603.8 L540.7 606.0 L545.2 607.3 L549.1 607.5 L553.7 606.6 L560.1 604.0 L562.1 604.0 L564.0 604.8 L711.5 752.2 L712.7 754.0 L713.1 756.1 L713.0 813.4 L712.2 815.3 L710.8 816.8 L706.1 818.6 L702.8 820.3 L699.8 822.8 L697.5 825.7 L695.4 829.8 L694.5 833.4 L694.3 837.3 L694.9 841.1 L696.1 844.6 L698.0 847.7 L699.9 849.9 L702.7 852.3 L706.1 854.0 L708.9 855.0 L712.6 855.5 L716.2 855.3 L719.1 854.7 L722.6 853.2 L725.6 851.2 L728.3 848.6 L730.0 846.1 L731.5 842.9 L732.4 839.2 L732.7 836.3 L732.4 833.4 L731.6 829.9 L730.4 827.2 L728.3 824.2 L726.3 822.0 L723.4 819.9 L716.1 816.8 L714.7 815.3 L713.9 813.4 L713.7 753.5 L565.3 605.0 L564.1 603.3 L563.7 601.2 L563.8 600.2 L565.9 595.6 L566.8 592.9 L567.3 589.3 L567.2 586.3 L566.5 582.8 L565.4 580.0 L563.6 576.9 L561.6 574.7 L557.9 571.8 L553.6 569.9 L549.1 569.1 L544.4 569.4 L541.7 570.2 L539.1 571.3 L536.7 572.8 L534.6 574.7 L532.7 576.8 L531.2 579.2 L528.6 585.7 L527.9 586.5 L526.1 587.6 L524.1 588.0 L489.4 588.0 L488.4 587.9 L486.4 587.1 L484.9 585.6 L483.1 580.9 L481.9 578.4 L479.7 575.4 L477.6 573.4 L474.5 571.4 L471.8 570.2 L468.3 569.3 L465.4 569.1 L461.6 569.5 L458.0 570.6 L454.7 572.4 L451.8 574.8 L449.4 577.7 L447.7 581.0 L446.6 584.6 L446.2 588.4 L446.6 592.1 L447.7 595.7 L449.5 599.0 L451.9 601.9 L454.8 604.3 L458.1 606.1 L461.8 607.1 L466.5 607.6 L468.5 608.4 L470.0 609.9 L470.5 610.9 L471.0 613.0 L471.0 830.5 L470.5 832.6 L470.0 833.6 L468.5 835.1 L466.5 835.9 L465.5 836.0 L323.0 835.9 L321.1 835.1 L319.6 833.6 L317.8 828.9 L316.5 826.4 L314.4 823.5 L312.2 821.4 L309.2 819.4 L306.6 818.3 L303.8 817.5 L300.1 817.1 L297.3 817.3 L294.4 818.0 L291.1 819.4 L288.6 820.9 L285.9 823.4 L284.1 825.7 L282.4 828.9 L281.4 831.7 L280.9 835.4 L281.1 839.2 L282.0 842.9 L283.6 846.3 L285.9 849.3 L288.7 851.8 L291.9 853.7 L295.5 855.0 L299.2 855.5 L303.0 855.3 L306.6 854.4 L310.0 852.8 L313.0 850.5 L315.5 847.7 L317.5 844.5 Z  M338.7 858.7 L336.2 859.0 L334.0 860.2 L328.2 866.5 L321.9 871.3 L316.5 874.1 L310.6 876.2 L303.4 877.4 L295.5 877.3 L288.7 875.9 L282.0 873.3 L278.3 871.3 L275.1 869.1 L269.9 864.4 L265.1 858.1 L261.7 851.4 L259.6 843.8 L258.9 836.9 L259.5 829.0 L260.5 825.0 L261.7 821.2 L264.1 816.3 L267.4 811.2 L271.4 806.7 L276.0 802.9 L280.2 800.3 L285.7 797.7 L291.4 796.1 L297.5 795.2 L302.7 795.2 L307.4 795.8 L312.6 797.1 L317.2 798.8 L321.7 801.3 L325.8 804.1 L329.6 807.6 L334.0 812.5 L335.7 813.4 L337.6 813.9 L441.4 814.0 L442.9 813.8 L444.8 813.2 L447.4 811.1 L448.6 808.9 L449.0 806.4 L448.9 629.7 L448.2 627.4 L447.1 625.7 L445.6 624.4 L440.4 621.0 L436.7 617.8 L432.8 613.4 L429.4 608.3 L427.1 603.4 L425.3 597.6 L424.4 591.6 L424.3 585.7 L425.3 578.8 L427.6 571.9 L431.5 564.9 L435.9 559.6 L441.5 554.8 L448.3 550.8 L454.9 548.5 L458.7 547.6 L462.8 547.2 L468.0 547.2 L472.8 547.7 L477.9 549.0 L482.5 550.8 L487.1 553.2 L491.1 556.1 L495.0 559.6 L499.4 564.4 L501.1 565.4 L503.0 565.9 L510.1 565.9 L512.5 565.4 L514.9 563.8 L518.5 559.7 L521.5 556.8 L528.1 552.3 L531.7 550.5 L535.6 549.0 L540.6 547.8 L544.6 547.2 L548.8 547.1 L553.5 547.4 L557.4 548.2 L561.5 549.3 L566.2 551.3 L569.8 553.2 L573.2 555.6 L576.8 558.8 L580.3 562.6 L583.1 566.5 L585.1 570.2 L587.1 575.1 L588.4 579.7 L589.2 584.8 L589.3 589.0 L589.0 595.4 L589.7 597.8 L590.8 599.4 L729.1 737.7 L732.1 741.4 L733.5 743.8 L734.8 747.0 L735.7 752.4 L735.8 797.7 L736.0 799.7 L737.3 802.4 L744.5 809.2 L747.3 812.9 L749.5 816.4 L751.7 821.1 L753.1 824.9 L754.0 829.0 L754.6 833.7 L754.3 841.7 L753.6 845.7 L752.5 849.5 L751.0 853.3 L749.2 856.9 L747.0 860.3 L744.5 863.5 L741.6 866.4 L738.6 869.0 L735.2 871.3 L731.7 873.3 L728.0 874.9 L724.2 876.1 L720.2 877.0 L716.0 877.4 L710.1 877.4 L704.9 876.6 L700.1 875.3 L694.5 872.9 L689.5 869.8 L685.3 866.4 L682.0 862.9 L678.2 857.7 L676.9 856.3 L674.8 855.1 L672.4 854.6 L669.5 855.1 L667.4 856.3 L666.0 857.7 L662.3 862.9 L659.4 865.9 L654.9 869.8 L650.8 872.3 L646.0 874.6 L641.5 876.1 L636.3 877.2 L631.3 877.5 L626.2 877.3 L621.5 876.5 L616.4 874.9 L612.5 873.3 L608.4 870.9 L604.2 867.8 L601.2 865.0 L596.8 860.2 L594.7 859.0 L592.8 858.7 L338.7 858.7 Z M338.6 847.7 L593.3 847.7 L598.0 848.6 L602.3 850.6 L605.2 852.9 L611.2 859.4 L614.4 861.7 L617.4 863.4 L623.9 865.7 L627.3 866.3 L631.3 866.5 L634.7 866.3 L638.6 865.5 L641.9 864.4 L645.5 862.7 L648.4 860.9 L651.8 858.0 L654.4 855.1 L658.0 850.1 L661.6 846.9 L664.4 845.3 L667.0 844.3 L670.1 843.7 L672.9 843.6 L676.1 844.0 L678.4 844.7 L683.0 847.1 L686.2 850.1 L689.8 855.1 L692.5 858.0 L695.1 860.3 L698.8 862.7 L702.4 864.4 L706.6 865.7 L710.0 866.3 L714.4 866.5 L720.3 865.7 L725.9 863.8 L731.1 860.9 L735.5 857.0 L739.1 852.3 L741.7 847.0 L743.3 841.2 L743.6 835.3 L743.3 831.4 L742.5 828.0 L739.9 821.6 L736.2 816.4 L730.2 810.9 L728.4 808.9 L726.6 805.8 L725.4 802.4 L724.8 797.8 L724.8 753.3 L724.3 750.4 L722.9 747.4 L721.3 745.5 L582.4 606.5 L579.8 602.5 L578.3 597.9 L577.9 594.4 L578.3 589.3 L578.2 585.8 L577.6 581.9 L576.7 578.6 L575.2 574.9 L573.5 571.9 L569.1 566.6 L566.5 564.3 L563.2 562.1 L557.3 559.5 L553.5 558.6 L550.1 558.2 L543.2 558.5 L537.0 560.2 L531.7 562.9 L527.5 566.3 L521.6 572.6 L517.6 575.2 L514.5 576.3 L511.8 576.8 L502.6 576.9 L497.9 575.9 L493.6 573.8 L490.8 571.5 L487.5 567.6 L485.0 565.3 L481.8 562.9 L478.8 561.2 L475.1 559.7 L471.8 558.8 L467.9 558.2 L464.4 558.1 L458.6 558.9 L453.4 560.6 L448.2 563.5 L443.7 567.3 L440.0 571.9 L437.7 576.3 L435.9 581.9 L435.2 587.8 L435.5 592.2 L436.4 596.6 L437.9 600.8 L439.8 604.2 L441.8 607.1 L444.8 610.3 L447.8 612.8 L452.8 616.0 L456.0 619.2 L458.6 623.7 L459.8 628.4 L460.0 806.5 L459.6 810.3 L458.5 813.7 L456.0 817.9 L452.6 821.3 L449.8 823.0 L447.6 824.0 L442.8 824.9 L337.6 825.0 L332.9 824.1 L328.5 822.0 L325.7 819.8 L319.6 813.3 L316.4 810.9 L312.5 808.8 L309.3 807.6 L305.0 806.5 L301.1 806.1 L297.6 806.2 L293.2 806.9 L289.0 808.2 L285.0 810.2 L281.3 812.7 L278.0 815.7 L275.2 819.1 L273.0 823.0 L271.0 828.0 L270.0 833.9 L270.1 839.8 L271.3 845.6 L273.7 851.0 L277.0 855.9 L281.3 860.0 L286.3 863.2 L291.8 865.4 L296.6 866.3 L301.1 866.5 L305.5 866.0 L310.7 864.6 L314.8 862.7 L318.5 860.3 L321.8 857.3 L325.7 852.9 L329.2 850.2 L333.7 848.3 L338.6 847.7 Z M658.0 822.5 L654.4 817.6 L651.8 814.6 L649.2 812.4 L645.9 810.2 L642.8 808.6 L638.6 807.2 L634.7 806.4 L631.3 806.1 L624.4 806.8 L621.1 807.7 L617.4 809.2 L614.4 810.9 L611.2 813.3 L608.7 815.7 L605.4 819.5 L602.6 821.8 L598.3 824.0 L593.7 824.9 L499.7 824.9 L495.4 824.1 L492.0 822.6 L488.8 820.3 L486.3 817.6 L485.0 815.6 L483.7 812.6 L482.9 809.9 L482.6 806.7 L482.6 621.3 L483.3 616.4 L485.1 612.1 L490.0 606.0 L492.9 603.3 L497.1 600.9 L501.4 599.8 L509.8 599.6 L514.2 600.2 L517.6 601.4 L520.6 603.3 L522.7 605.1 L526.1 608.9 L528.6 611.3 L532.2 613.9 L536.1 616.0 L540.3 617.5 L544.7 618.3 L548.6 618.5 L554.5 618.1 L557.8 618.4 L561.5 619.6 L565.4 621.8 L698.4 754.9 L700.1 757.7 L701.2 760.2 L701.9 763.4 L702.1 766.0 L702.1 799.2 L701.2 803.5 L699.2 807.9 L696.9 810.7 L690.8 816.4 L686.5 822.2 L684.8 824.0 L680.9 826.8 L677.3 828.3 L674.1 828.9 L671.3 829.0 L668.1 828.6 L665.5 827.8 L662.6 826.4 L660.3 824.8 L658.0 822.5 Z M662.3 809.7 L667.4 816.4 L670.0 817.7 L672.9 818.0 L675.6 817.2 L677.6 815.7 L682.5 809.2 L685.3 806.3 L689.0 803.1 L690.6 800.7 L691.1 797.7 L691.1 765.5 L690.6 763.1 L689.3 761.1 L558.8 630.7 L556.7 629.5 L554.8 629.1 L547.4 629.5 L541.4 628.9 L536.7 627.9 L531.8 626.1 L527.4 623.9 L523.0 621.0 L518.6 617.0 L514.5 612.5 L512.0 611.0 L510.1 610.6 L503.0 610.7 L501.1 611.2 L499.0 612.5 L494.7 617.6 L493.9 619.5 L493.6 621.5 L493.6 806.4 L494.0 808.9 L495.5 811.4 L498.3 813.4 L501.2 814.0 L593.2 813.9 L595.1 813.4 L596.8 812.5 L601.2 807.7 L604.2 804.8 L608.4 801.8 L612.5 799.4 L617.4 797.3 L622.1 796.1 L626.2 795.4 L631.5 795.1 L636.3 795.5 L641.5 796.5 L646.0 798.0 L650.8 800.3 L654.9 802.9 L659.0 806.3 L662.3 809.7 Z " fill="none" stroke="#4650bd" stroke-width="0.7" stroke-opacity="0.55"/><path d="M455 628 L498 605" stroke="#f0e24d" stroke-opacity="0.3" stroke-width="10" stroke-linecap="round"/><path d="M498 605 L219 516" stroke="#f0e24d" stroke-opacity="0.3" stroke-width="10" stroke-linecap="round"/><path d="M219 516 L219 918" stroke="#f0e24d" stroke-opacity="0.3" stroke-width="10" stroke-linecap="round"/><circle cx="328" cy="826" r="5" fill="#f0e24d" fill-opacity="0.3"/><circle cx="455" cy="628" r="5" fill="#f0e24d" fill-opacity="0.3"/><text x="218" y="919" font-size="10" fill="#000" font-family="Liberation Sans">1</text><text x="323" y="832" font-size="10" fill="#000" font-family="Liberation Sans">2</text><text x="453" y="630" font-size="10" fill="#000" font-family="Liberation Sans">4</text><text x="495" y="609" font-size="10" fill="#000" font-family="Liberation Sans">5</text><text x="216" y="516" font-size="10" fill="#000" font-family="Liberation Sans">9</text></svg>
<div class="a" style="left:799px;top:55px;width:727px;height:851px;background:#7fdbea;border-top:1px solid #5cc8dc;border-left:1px solid #60c0d4"></div>
<div class="t" style="left:1304px;top:63.80px;font-size:15px;color:#1a1a1a;font-weight:normal;font-family:'Liberation Sans';transform:scaleX(0.9631);transform-origin:0 0;">222.nc - Candle</div>
<svg style="left:810px;top:63px" width="15" height="15"><rect x="0" y="0" width="15" height="15" rx="1.5" fill="#f5a030"/><path d="M4 12 Q3 7 7 3 Q6.5 7 9 8 Q9.5 6 10.5 6 Q12 10 10 12" fill="none" stroke="#fff" stroke-width="1.3"/></svg>
<div class="a" style="left:807px;top:86px;width:719px;height:812px;background:#f0f0f0"></div>
<div class="a" style="left:807px;top:86px;width:719px;height:21px;background:#f5f6f7;border-bottom:1px solid #e4e4e4"></div>
<div class="t" style="left:815.2px;top:90.64px;font-size:12px;color:#000;font-weight:normal;font-family:'Liberation Sans';transform:scaleX(0.9758);transform-origin:0 0;">Файл</div>
<div class="t" style="left:860px;top:90.64px;font-size:12px;color:#000;font-weight:normal;font-family:'Liberation Sans';transform:scaleX(0.9563);transform-origin:0 0;">Сервис</div>
<div class="t" style="left:916px;top:90.64px;font-size:12px;color:#000;font-weight:normal;font-family:'Liberation Sans';transform:scaleX(0.9729);transform-origin:0 0;">Справка</div>
<div class="a" style="left:816px;top:123px;width:720px;height:765px;border:1px solid #d8d8d8;border-right:none"></div>
<div class="a" style="left:822px;top:116px;width:112px;height:14px;background:#f0f0f0"></div>
<div class="t" style="left:826.3px;top:117.64px;font-size:12px;color:#000;font-weight:normal;font-family:'Liberation Sans';transform:scaleX(1.0006);transform-origin:0 0;">G-code программа</div>
<div class="a" style="left:825px;top:139px;width:701px;height:357px;background:#fff;border:1px solid #a0a0a0;border-right:none"></div>
<div class="t" style="left:836px;top:152.99px;font-size:12.3px;color:#000;font-weight:normal;font-family:'Liberation Sans';transform:scaleX(0.9831);transform-origin:0 0;">[GC:G0 G54 G17 G21 G90 G94 M5 M9 T0 F0 S200]</div>
<div class="t" style="left:836px;top:167.19px;font-size:12.3px;color:#000;font-weight:normal;font-family:'Liberation Sans';transform:scaleX(1.0314);transform-origin:0 0;">П/Ш: 0 / 0</div>
<div class="t" style="left:836px;top:424.62px;font-size:12.5px;color:#000;font-weight:normal;font-family:'Liberation Sans';transform:scaleX(1.0345);transform-origin:0 0;">X: -0.008 ... 17.788</div>
<div class="t" style="left:836px;top:439.82px;font-size:12.5px;color:#000;font-weight:normal;font-family:'Liberation Sans';transform:scaleX(1.0507);transform-origin:0 0;">Y: -0.008 ... 12.708</div>
<div class="t" style="left:836px;top:454.72px;font-size:12.5px;color:#000;font-weight:normal;font-family:'Liberation Sans';transform:scaleX(1.0439);transform-origin:0 0;">Z: -0.002 ... 0.100</div>
<div class="t" style="left:836px;top:469.92px;font-size:12.5px;color:#000;font-weight:normal;font-family:'Liberation Sans';transform:scaleX(1.0498);transform-origin:0 0;">17.796 / 12.716 / 0.102</div>
<svg style="left:1226px;top:497px" width="26" height="9"><circle cx="5" cy="4.5" r="3" fill="none" stroke="#999"/><circle cx="13" cy="4.5" r="3" fill="none" stroke="#999"/><circle cx="21" cy="4.5" r="3" fill="none" stroke="#999"/></svg>
<div class="a" style="left:825px;top:508px;width:701px;height:342px;background:#fff;border:1px solid #a0a0a0;border-right:none;overflow:hidden"></div>
<div class="a" style="left:826px;top:509px;width:700px;height:23px;background:#fbfbfb"></div><div class="a" style="left:826px;top:532px;width:700px;height:29px;background:#ccccfe"></div><div class="a" style="left:925px;top:509px;width:1px;height:23px;background:#e2e8f0"></div><div class="a" style="left:1188px;top:509px;width:1px;height:23px;background:#e2e8f0"></div><div class="a" style="left:1288px;top:509px;width:1px;height:23px;background:#e2e8f0"></div><svg style="left:826px;top:532px" width="700" height="317"><path d="M0 29.5 H700" stroke="#cfcfcf" stroke-dasharray="3 2"/><path d="M0 59.5 H700" stroke="#cfcfcf" stroke-dasharray="3 2"/><path d="M0 89.5 H700" stroke="#cfcfcf" stroke-dasharray="3 2"/><path d="M0 119.5 H700" stroke="#cfcfcf" stroke-dasharray="3 2"/><path d="M0 149.5 H700" stroke="#cfcfcf" stroke-dasharray="3 2"/><path d="M0 179.5 H700" stroke="#cfcfcf" stroke-dasharray="3 2"/><path d="M0 209.5 H700" stroke="#cfcfcf" stroke-dasharray="3 2"/><path d="M0 239.5 H700" stroke="#cfcfcf" stroke-dasharray="3 2"/><path d="M0 269.5 H700" stroke="#cfcfcf" stroke-dasharray="3 2"/><path d="M0 299.5 H700" stroke="#cfcfcf" stroke-dasharray="3 2"/><path d="M99.5 0 V317" stroke="#d4d4d4" stroke-dasharray="3 2"/><path d="M362.5 0 V317" stroke="#d4d4d4" stroke-dasharray="3 2"/><path d="M462.5 0 V317" stroke="#d4d4d4" stroke-dasharray="3 2"/><path d="M0.5 29 V317" stroke="#d4d4d4" stroke-dasharray="3 2"/></svg>
<div class="t" style="left:868.9px;top:515.02px;font-size:12.5px;color:#000;font-weight:normal;font-family:'Liberation Sans';transform:scaleX(0.9984);transform-origin:0 0;">№</div>
<div class="t" style="left:1033.1px;top:515.19px;font-size:12.3px;color:#000;font-weight:normal;font-family:'Liberation Sans';transform:scaleX(0.9559);transform-origin:0 0;">Команда</div>
<div class="t" style="left:1209px;top:515.19px;font-size:12.3px;color:#000;font-weight:normal;font-family:'Liberation Sans';transform:scaleX(0.9583);transform-origin:0 0;">Состояние</div>
<div class="t" style="left:1449.2px;top:515.19px;font-size:12.3px;color:#000;font-weight:normal;font-family:'Liberation Sans';transform:scaleX(0.9122);transform-origin:0 0;">Ответ</div>
<div class="a" style="left:826px;top:532px;width:700px;height:317px;overflow:hidden">
<div class="t" style="left:45.5px;top:8.72px;font-size:12.5px;color:#000;font-weight:normal;font-family:'Liberation Sans';">1</div>
<div class="t" style="left:103.39999999999998px;top:8.72px;font-size:12.5px;color:#000;font-weight:normal;font-family:'Liberation Sans';transform:scaleX(0.855);transform-origin:0 0;">G21</div>
<div class="t" style="left:366.4000000000001px;top:8.89px;font-size:12.3px;color:#000;font-weight:normal;font-family:'Liberation Sans';transform:scaleX(0.9356);transform-origin:0 0;">В очереди</div>
<div class="t" style="left:45.5px;top:38.72px;font-size:12.5px;color:#000;font-weight:normal;font-family:'Liberation Sans';">2</div>
<div class="t" style="left:103.39999999999998px;top:38.72px;font-size:12.5px;color:#000;font-weight:normal;font-family:'Liberation Sans';transform:scaleX(0.855);transform-origin:0 0;">G90</div>
<div class="t" style="left:366.4000000000001px;top:38.89px;font-size:12.3px;color:#000;font-weight:normal;font-family:'Liberation Sans';transform:scaleX(0.9356);transform-origin:0 0;">В очереди</div>
<div class="t" style="left:45.5px;top:68.72px;font-size:12.5px;color:#000;font-weight:normal;font-family:'Liberation Sans';">3</div>
<div class="t" style="left:103.39999999999998px;top:68.72px;font-size:12.5px;color:#000;font-weight:normal;font-family:'Liberation Sans';transform:scaleX(0.855);transform-origin:0 0;">G94</div>
<div class="t" style="left:366.4000000000001px;top:68.89px;font-size:12.3px;color:#000;font-weight:normal;font-family:'Liberation Sans';transform:scaleX(0.9356);transform-origin:0 0;">В очереди</div>
<div class="t" style="left:45.5px;top:98.72px;font-size:12.5px;color:#000;font-weight:normal;font-family:'Liberation Sans';">4</div>
<div class="t" style="left:103.39999999999998px;top:98.72px;font-size:12.5px;color:#000;font-weight:normal;font-family:'Liberation Sans';transform:scaleX(0.855);transform-origin:0 0;">F3.00</div>
<div class="t" style="left:366.4000000000001px;top:98.89px;font-size:12.3px;color:#000;font-weight:normal;font-family:'Liberation Sans';transform:scaleX(0.9356);transform-origin:0 0;">В очереди</div>
<div class="t" style="left:45.5px;top:128.72px;font-size:12.5px;color:#000;font-weight:normal;font-family:'Liberation Sans';">5</div>
<div class="t" style="left:103.39999999999998px;top:128.72px;font-size:12.5px;color:#000;font-weight:normal;font-family:'Liberation Sans';transform:scaleX(0.855);transform-origin:0 0;">G00 Z0.1000</div>
<div class="t" style="left:366.4000000000001px;top:128.89px;font-size:12.3px;color:#000;font-weight:normal;font-family:'Liberation Sans';transform:scaleX(0.9356);transform-origin:0 0;">В очереди</div>
<div class="t" style="left:45.5px;top:158.72px;font-size:12.5px;color:#000;font-weight:normal;font-family:'Liberation Sans';">6</div>
<div class="t" style="left:103.39999999999998px;top:158.72px;font-size:12.5px;color:#000;font-weight:normal;font-family:'Liberation Sans';transform:scaleX(0.855);transform-origin:0 0;">M03</div>
<div class="t" style="left:366.4000000000001px;top:158.89px;font-size:12.3px;color:#000;font-weight:normal;font-family:'Liberation Sans';transform:scaleX(0.9356);transform-origin:0 0;">В очереди</div>
<div class="t" style="left:45.5px;top:188.72px;font-size:12.5px;color:#000;font-weight:normal;font-family:'Liberation Sans';">7</div>
<div class="t" style="left:103.39999999999998px;top:188.72px;font-size:12.5px;color:#000;font-weight:normal;font-family:'Liberation Sans';transform:scaleX(0.855);transform-origin:0 0;">G4 P1</div>
<div class="t" style="left:366.4000000000001px;top:188.89px;font-size:12.3px;color:#000;font-weight:normal;font-family:'Liberation Sans';transform:scaleX(0.9356);transform-origin:0 0;">В очереди</div>
<div class="t" style="left:45.5px;top:218.72px;font-size:12.5px;color:#000;font-weight:normal;font-family:'Liberation Sans';">8</div>
<div class="t" style="left:103.39999999999998px;top:218.72px;font-size:12.5px;color:#000;font-weight:normal;font-family:'Liberation Sans';transform:scaleX(0.855);transform-origin:0 0;">G00 X3.2772Y2.7130</div>
<div class="t" style="left:366.4000000000001px;top:218.89px;font-size:12.3px;color:#000;font-weight:normal;font-family:'Liberation Sans';transform:scaleX(0.9356);transform-origin:0 0;">В очереди</div>
<div class="t" style="left:45.5px;top:248.72px;font-size:12.5px;color:#000;font-weight:normal;font-family:'Liberation Sans';">9</div>
<div class="t" style="left:103.39999999999998px;top:248.72px;font-size:12.5px;color:#000;font-weight:normal;font-family:'Liberation Sans';transform:scaleX(0.855);transform-origin:0 0;">G01 Z-0.0020</div>
<div class="t" style="left:366.4000000000001px;top:248.89px;font-size:12.3px;color:#000;font-weight:normal;font-family:'Liberation Sans';transform:scaleX(0.9356);transform-origin:0 0;">В очереди</div>
<div class="t" style="left:42px;top:278.72px;font-size:12.5px;color:#000;font-weight:normal;font-family:'Liberation Sans';">10</div>
<div class="t" style="left:103.39999999999998px;top:278.72px;font-size:12.5px;color:#000;font-weight:normal;font-family:'Liberation Sans';transform:scaleX(0.855);transform-origin:0 0;">G01 X3.2654Y2.7600</div>
<div class="t" style="left:366.4000000000001px;top:278.89px;font-size:12.3px;color:#000;font-weight:normal;font-family:'Liberation Sans';transform:scaleX(0.9356);transform-origin:0 0;">В очереди</div>
<div class="t" style="left:42px;top:308.72px;font-size:12.5px;color:#000;font-weight:normal;font-family:'Liberation Sans';">11</div>
<div class="t" style="left:103.39999999999998px;top:308.72px;font-size:12.5px;color:#000;font-weight:normal;font-family:'Liberation Sans';transform:scaleX(0.855);transform-origin:0 0;">G01 X3.2403Y2.8301</div>
<div class="t" style="left:366.4000000000001px;top:308.89px;font-size:12.3px;color:#000;font-weight:normal;font-family:'Liberation Sans';transform:scaleX(0.9356);transform-origin:0 0;">В очереди</div>
</div>
<div class="a" style="left:825px;top:861px;width:13px;height:13px;background:#fff;border:1px solid #555"></div>
<div class="t" style="left:843.2px;top:862.39px;font-size:12.3px;color:#000;font-weight:normal;font-family:'Liberation Sans';transform:scaleX(1.0213);transform-origin:0 0;">Режим проверки</div>
<div class="a" style="left:951px;top:861px;width:13px;height:13px;background:#fff;border:1px solid #555"></div>
<svg style="left:953px;top:863px" width="9" height="9"><path d="M1 4.5 L3.5 7.5 L8 1" fill="none" stroke="#000" stroke-width="1.6"/></svg>
<div class="t" style="left:969.3px;top:862.39px;font-size:12.3px;color:#000;font-weight:normal;font-family:'Liberation Sans';transform:scaleX(1.0062);transform-origin:0 0;">Автопрокрутка</div>
<div class="a" style="left:1235px;top:858px;width:73px;height:21px;background:linear-gradient(#f4f4f4,#e6e6e6);border:1px solid #acacac"></div>
<div class="a" style="left:1316px;top:858px;width:73px;height:21px;background:linear-gradient(#f4f4f4,#e6e6e6);border:1px solid #acacac"></div>
<div class="a" style="left:1397px;top:858px;width:98px;height:21px;background:linear-gradient(#f4f4f4,#e6e6e6);border:1px solid #acacac"></div>
<div class="a" style="left:1503px;top:858px;width:40px;height:21px;background:linear-gradient(#f4f4f4,#e6e6e6);border:1px solid #acacac"></div>
<div class="t" style="left:1247.5px;top:863.59px;font-size:12.3px;color:#000;font-weight:normal;font-family:'Liberation Sans';transform:scaleX(0.9794);transform-origin:0 0;">Открыть</div>
<div class="t" style="left:1335.5px;top:863.59px;font-size:12.3px;color:#000;font-weight:normal;font-family:'Liberation Sans';transform:scaleX(0.9259);transform-origin:0 0;">Сброс</div>
<div class="t" style="left:1416px;top:863.59px;font-size:12.3px;color:#000;font-weight:normal;font-family:'Liberation Sans';transform:scaleX(0.9724);transform-origin:0 0;">Отправить</div>
<svg style="left:1485px;top:873px" width="7" height="4"><path d="M0 0 H7 L3.5 4 Z" fill="#000"/></svg>
<div class="a" style="left:1519px;top:864px;width:3px;height:10px;background:#8070a0"></div>
<svg style="left:0;top:0" width="1526" height="938"><path d="M1163.0 390.5 L1161.6 393.6 L1159.7 396.3 L1157.3 398.7 L1154.5 400.6 L1151.4 402.0 L1148.1 402.7 L1144.8 402.8 L1141.5 402.3 L1138.5 401.1 L1135.8 399.4 L1133.6 397.1 L1131.9 394.5 L1130.7 391.5 L1130.2 388.3 L1130.3 385.1 L1131.1 381.9 L1132.2 379.5 L1133.9 376.9 L1135.7 374.9 L1138.2 372.9 L1140.5 371.6 L1143.5 370.5 L1148.6 369.9 L1151.0 370.1 L1153.9 370.9 L1156.2 372.0 L1158.7 373.8 L1160.4 375.6 L1162.1 378.1 L1163.6 382.7 L1259.7 385.0 L1265.3 248.5 L1262.3 248.2 L1259.3 247.3 L1256.7 246.0 L1254.3 244.1 L1252.5 241.9 L1251.1 239.4 L1250.3 236.6 L1250.1 233.8 L1250.6 231.0 L1251.6 228.4 L1253.1 225.9 L1255.2 223.8 L1257.6 222.0 L1260.3 220.8 L1263.3 220.0 L1266.4 219.8 L1268.8 220.0 L1271.6 220.7 L1273.8 221.6 L1276.2 223.2 L1277.9 224.7 L1279.6 226.9 L1281.3 231.0 L1303.3 231.4 L1305.1 227.6 L1308.1 224.4 L1312.0 222.1 L1316.4 220.9 L1319.6 220.9 L1323.4 221.6 L1326.8 223.1 L1329.7 225.2 L1331.3 226.9 L1332.8 229.2 L1333.7 231.4 L1334.2 234.0 L1334.2 236.3 L1333.8 238.9 L1331.9 242.9 L1430.7 336.6 L1431.4 338.7 L1432.8 377.0 L1437.6 379.1 L1440.2 380.9 L1442.1 382.9 L1443.9 385.4 L1445.1 387.7 L1445.9 390.2 L1446.3 393.3 L1445.8 398.1 L1443.9 402.5 L1440.6 406.1 L1436.5 408.6 L1431.6 409.7 L1426.6 409.4 L1421.8 407.6 L1417.7 404.6 L1415.4 401.8 L1413.5 398.1 L1412.5 394.3 L1412.4 390.9 L1413.5 386.2 L1414.9 383.5 L1416.4 381.6 L1420.3 378.6 L1424.8 376.8 L1423.7 340.1 L1326.6 247.7 L1323.6 248.9 L1319.7 249.6 L1315.9 249.4 L1312.2 248.4 L1309.0 246.6 L1306.2 244.1 L1304.2 241.1 L1303.1 238.2 L1281.0 237.8 L1279.9 240.5 L1278.1 243.0 L1275.5 245.4 L1272.8 247.0 L1267.6 385.2 L1356.1 387.3 L1357.0 384.8 L1358.4 382.2 L1360.5 379.7 L1362.5 378.1 L1365.2 376.6 L1368.3 375.6 L1370.9 375.2 L1374.2 375.3 L1378.2 376.3 L1382.4 378.6 L1385.5 381.4 L1387.7 384.8 L1389.2 388.9 L1389.5 392.9 L1388.6 397.5 L1386.8 401.2 L1384.0 404.3 L1380.6 406.6 L1376.8 408.0 L1372.6 408.4 L1369.5 408.0 L1367.0 407.3 L1364.6 406.1 L1361.9 404.3 L1360.0 402.5 L1358.1 399.9 L1356.1 395.2 L1163.0 390.5 Z M1172.3 398.2 L1170.0 398.4 L1167.8 399.2 L1165.8 400.5 L1162.4 403.9 L1159.5 406.1 L1155.9 408.1 L1151.7 409.5 L1147.6 410.2 L1143.3 410.2 L1139.3 409.5 L1135.3 408.1 L1131.3 405.7 L1128.0 402.5 L1125.4 398.7 L1123.6 394.5 L1122.8 389.9 L1122.8 385.3 L1123.8 380.7 L1125.7 376.3 L1129.5 371.1 L1131.8 368.9 L1134.7 366.7 L1140.6 364.0 L1144.0 363.1 L1147.6 362.7 L1153.4 363.1 L1158.9 365.0 L1163.6 368.1 L1169.3 374.1 L1171.3 375.2 L1173.5 375.6 L1244.3 377.3 L1246.5 376.9 L1249.1 375.7 L1250.8 374.1 L1252.1 372.2 L1252.9 368.9 L1257.7 257.9 L1257.3 255.9 L1255.9 253.7 L1249.3 248.8 L1247.2 246.4 L1245.7 244.1 L1244.4 241.3 L1243.5 238.4 L1243.2 232.9 L1244.0 228.9 L1245.4 225.4 L1247.8 221.9 L1250.3 219.4 L1253.7 216.8 L1257.7 215.0 L1261.6 213.9 L1266.0 213.5 L1271.4 214.0 L1276.6 215.8 L1281.1 218.6 L1286.1 223.5 L1288.0 224.4 L1290.1 224.8 L1295.3 224.8 L1297.9 224.2 L1300.1 222.8 L1303.9 219.3 L1306.9 217.4 L1311.6 215.5 L1315.9 214.6 L1320.7 214.6 L1325.7 215.6 L1330.1 217.5 L1334.5 220.6 L1337.7 224.3 L1340.1 228.9 L1341.2 233.9 L1341.2 240.7 L1341.9 242.6 L1343.1 244.3 L1436.7 332.9 L1438.2 335.8 L1438.8 338.5 L1439.9 367.6 L1440.3 369.8 L1441.9 372.9 L1447.1 377.7 L1450.3 381.9 L1452.6 387.0 L1453.8 392.8 L1453.7 397.5 L1452.7 402.0 L1450.7 406.2 L1447.9 410.0 L1444.4 413.0 L1440.3 415.3 L1435.7 416.8 L1430.9 417.3 L1424.5 416.5 L1420.9 415.3 L1418.0 413.9 L1412.7 410.0 L1406.8 403.0 L1404.3 401.6 L1401.4 400.9 L1398.5 401.2 L1395.9 402.4 L1394.3 403.9 L1389.9 409.4 L1384.7 413.1 L1379.2 415.2 L1373.2 415.9 L1367.6 415.2 L1361.8 413.1 L1356.8 409.7 L1351.1 403.9 L1349.0 402.9 L1346.7 402.4 L1172.3 398.2 Z M1389.3 374.9 L1395.1 381.7 L1398.2 383.3 L1401.0 383.8 L1403.9 383.3 L1405.9 382.3 L1407.1 381.2 L1410.5 376.8 L1414.7 373.1 L1416.0 371.3 L1416.7 369.8 L1417.0 367.6 L1416.5 346.3 L1415.9 343.6 L1414.5 341.2 L1327.2 257.7 L1325.8 256.9 L1323.8 256.2 L1315.6 256.0 L1312.2 255.3 L1309.1 254.2 L1304.9 251.9 L1302.3 249.9 L1299.1 246.5 L1297.3 245.3 L1295.8 244.8 L1293.7 244.5 L1289.0 244.5 L1286.9 244.9 L1285.0 245.9 L1280.9 249.9 L1280.0 251.8 L1279.6 253.8 L1275.7 369.5 L1276.0 372.2 L1277.3 374.7 L1278.5 376.0 L1280.3 377.3 L1283.6 378.3 L1347.4 379.7 L1349.6 379.2 L1351.6 378.1 L1356.7 373.1 L1361.7 370.1 L1367.3 368.3 L1372.8 367.9 L1378.6 368.8 L1384.5 371.3 L1389.3 374.9 Z M1483.5 451.3 L1090.4 441.4 L1089.8 441.4 L1089.2 441.3 L1088.7 441.2 L1088.2 440.9 L1087.7 440.7 L1087.2 440.4 L1086.8 440.0 L1086.4 439.6 L1086.1 439.2 L1085.8 438.7 L1085.6 438.2 L1085.4 437.7 L1085.2 437.1 L1085.2 436.6 L1085.1 436.0 L1085.2 435.4 L1113.5 188.7 L1113.5 188.2 L1113.7 187.8 L1113.8 187.3 L1114.1 186.9 L1114.3 186.5 L1114.6 186.1 L1115.0 185.7 L1115.4 185.4 L1115.8 185.1 L1116.2 184.8 L1116.7 184.6 L1117.2 184.4 L1117.7 184.3 L1118.2 184.2 L1118.7 184.1 L1119.2 184.1 L1469.2 190.9 L1469.7 190.9 L1470.2 191.0 L1470.7 191.1 L1471.2 191.3 L1471.7 191.5 L1472.2 191.8 L1472.6 192.0 L1473.0 192.4 L1473.4 192.7 L1473.7 193.1 L1474.0 193.5 L1474.3 193.9 L1474.5 194.4 L1474.6 194.8 L1474.7 195.3 L1474.8 195.8 L1489.2 445.5 L1489.2 446.1 L1489.1 446.7 L1489.0 447.2 L1488.8 447.8 L1488.6 448.3 L1488.3 448.8 L1488.0 449.3 L1487.6 449.7 L1487.2 450.1 L1486.8 450.4 L1486.3 450.7 L1485.8 451.0 L1485.2 451.1 L1484.7 451.3 L1484.1 451.3 L1483.5 451.3 Z " fill="none" stroke="#000" stroke-width="1.25"/><path d="M1163.6 382.9 L1259.5 256.2 M1259.5 256.2 L1286.3 244.4 M1286.3 244.4 L1114.7 186.7 M1114.7 186.7 L1086.1 436.8 " fill="none" stroke="#000" stroke-width="1.25" stroke-dasharray="5 4"/><circle cx="1163.6" cy="382.9" r="2.4" fill="#f00"/><path d="M1066 417.8 L1109.8 419.2 L1104.5 465.3 L1058.7 463.7 Z" fill="none" stroke="#f00" stroke-width="1.1"/><path d="M1266 434.4 L1266 457.3 L1310.3 447.5 Z" fill="none" stroke="#f00" stroke-width="1.1"/><path d="M1108.5 235 L1094.3 270.7 L1115 272 Z" fill="none" stroke="#0d0" stroke-width="1.1"/><path d="M1084 440.8 L1007.4 402.1 M995.2 396 L1003.5 407.4 L1033 407.8 Z" fill="none" stroke="#00f" stroke-width="1.1"/><circle cx="1083.7" cy="440.8" r="2.6" fill="#0e0"/></svg>
</body></html>
